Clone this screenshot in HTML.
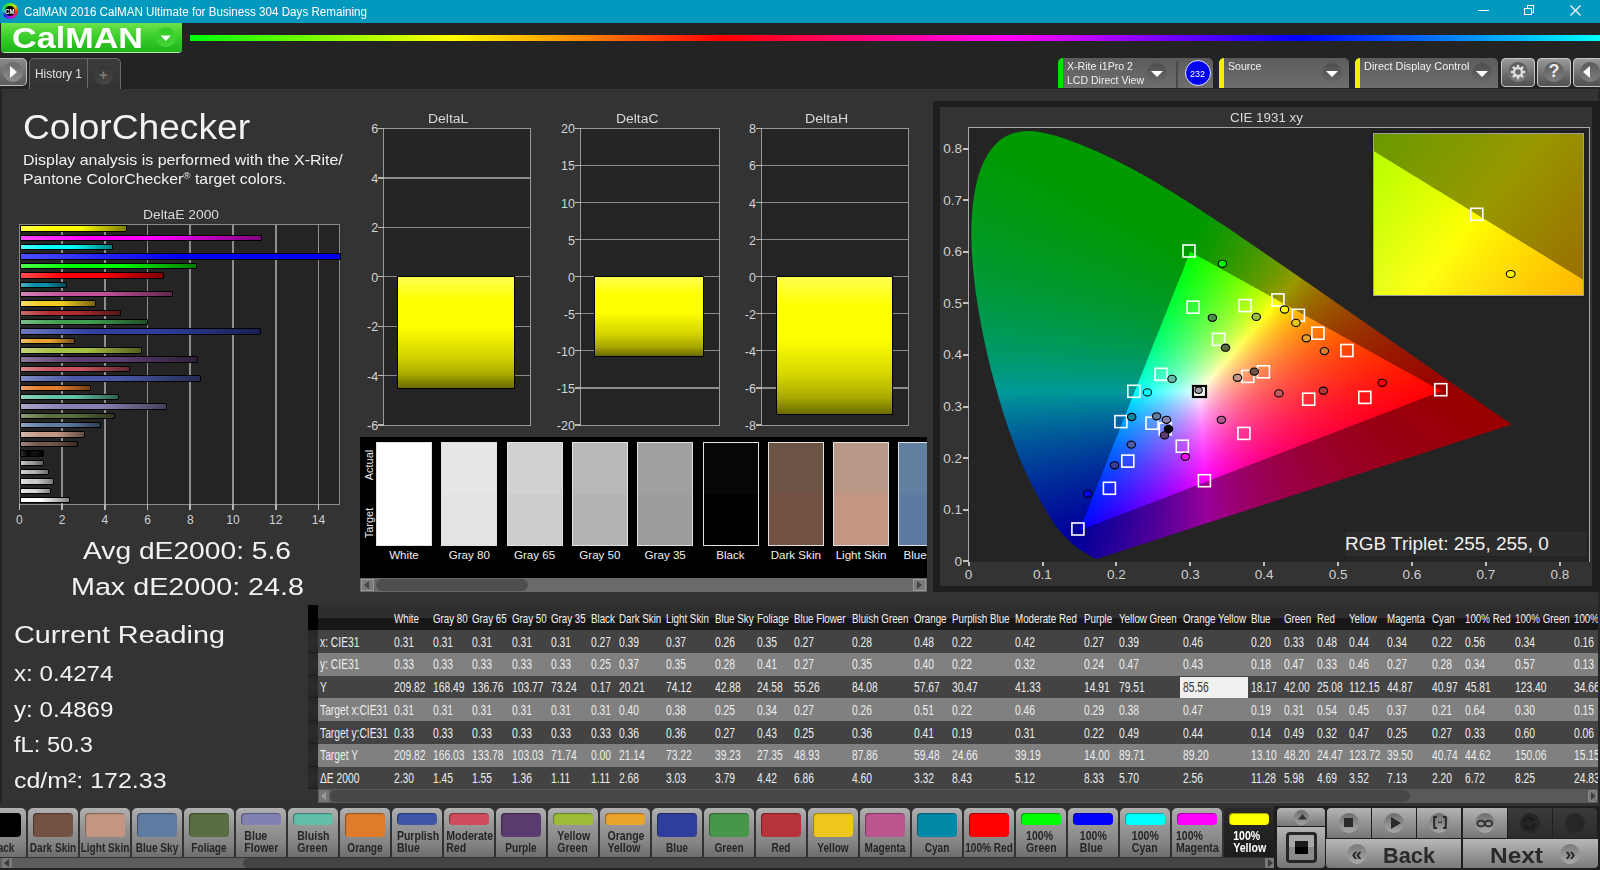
<!DOCTYPE html>
<html><head><meta charset="utf-8"><title>CalMAN ColorChecker</title>
<style>
html,body{margin:0;padding:0;width:1600px;height:870px;overflow:hidden;background:#232323;font-family:"Liberation Sans",sans-serif;}
body{position:relative;}
</style></head><body>
<div style="position:absolute;left:0;top:88.7px;width:1600px;height:715px;background:#333"></div>
<div style="position:absolute;left:0;top:88px;width:1.5px;height:715px;background:#242424"></div>
<div style="position:absolute;left:1598px;top:88px;width:2px;height:715px;background:#262626"></div>
<div style="position:absolute;left:0;top:0;width:1600px;height:23px;background:#0399be"></div>
<div style="position:absolute;left:2.3px;top:3.3px;width:15.6px;height:15.6px;border-radius:50%;background:conic-gradient(#60f020,#e0d000 50deg,#ff3010 95deg,#e010a0 140deg,#a020f0 180deg,#2020e0 230deg,#10d0c0 270deg,#30d030 320deg,#60f020)"></div>
<div style="position:absolute;left:4.8px;top:5.8px;width:10.6px;height:10.6px;border-radius:50%;background:#000"></div>
<div style="position:absolute;left:5.35px;top:7.91px;font-size:7.2px;line-height:7.2px;color:#fff;white-space:nowrap;font-weight:bold;transform:scaleX(0.8484);transform-origin:0 0;">CM</div>
<div style="position:absolute;left:23.50px;top:6.04px;font-size:12px;line-height:12px;color:#fff;white-space:nowrap;transform:scaleX(0.9685);transform-origin:0 0;">CalMAN 2016 CalMAN Ultimate for Business 304 Days Remaining</div>
<div style="position:absolute;left:1478px;top:10px;width:11px;height:1px;background:#fff"></div>
<div style="position:absolute;left:1526.5px;top:5px;width:7.5px;height:7.5px;border:1px solid #fff;box-sizing:border-box"></div>
<div style="position:absolute;left:1524px;top:7.5px;width:7.5px;height:7.5px;border:1px solid #fff;box-sizing:border-box;background:#0399be"></div>
<svg style="position:absolute;left:1569.5px;top:4.5px" width="11" height="11"><path d="M0.5 0.5L10.5 10.5M10.5 0.5L0.5 10.5" stroke="#fff" stroke-width="1.1"/></svg>
<div style="position:absolute;left:0;top:23px;width:1600px;height:65px;background:#232323"></div>
<div style="position:absolute;left:1px;top:23px;width:181px;height:29px;border-radius:0 0 4px 4px;background:linear-gradient(#6ee34c,#3ccf2a 45%,#1db51b);box-shadow:0 1px 0 #bfe9b6"></div>
<div style="position:absolute;left:12.00px;top:22.61px;font-size:30px;line-height:30px;color:#fff;white-space:nowrap;font-weight:bold;transform:scaleX(1.1391);transform-origin:0 0;">CalMAN</div>
<div style="position:absolute;left:156px;top:27px;width:20px;height:20px;border-radius:50%;background:radial-gradient(circle at 50% 30%,#2ecf26,#40d030 60%,#55dd40)"></div>
<svg style="position:absolute;left:160px;top:34px" width="12" height="8"><path d="M0.5 1.5L11 1.5L5.8 7z" fill="#fff"/></svg>
<div style="position:absolute;left:190px;top:35px;width:1410px;height:6px;background:linear-gradient(90deg,#00ff00 0px,#ffff00 260px,#ff8000 400px,#ff0000 530px,#ff00ff 820px,#0000ff 1110px,#00ffff 1410px);filter:blur(0.4px)"></div>
<div style="position:absolute;left:0px;top:58px;width:27px;height:28px;border-radius:0 5px 5px 0;background:linear-gradient(#8a8a8a,#5a5a5a);border:1.2px solid #c0c0c0;border-left:none;box-sizing:border-box"></div>
<div style="position:absolute;left:3px;top:62px;width:20px;height:20px;border-radius:50%;background:linear-gradient(#6a6a6a,#8e8e8e)"></div>
<svg style="position:absolute;left:10px;top:66px" width="8" height="12"><path d="M0 0L7 6L0 12z" fill="#fff"/></svg>
<div style="position:absolute;left:29px;top:58px;width:92px;height:31px;border-radius:5px 5px 0 0;background:linear-gradient(#3c3c3c,#323232);border:1px solid #6a6a6a;border-bottom:none;box-sizing:border-box"></div>
<div style="position:absolute;left:87.2px;top:59px;width:1.2px;height:29px;background:#6a6a6a"></div>
<div style="position:absolute;left:35.00px;top:67.94px;font-size:12px;line-height:12px;color:#e0e0e0;white-space:nowrap;transform:scaleX(0.9927);transform-origin:0 0;">History 1</div>
<div style="position:absolute;left:93.8px;top:65px;width:19px;height:20px;border-radius:50%;background:linear-gradient(#353535,#454545)"></div>
<div style="position:absolute;left:98.92px;top:67.10px;font-size:15px;line-height:15px;color:#7a7a7a;white-space:nowrap;font-weight:bold;">+</div>
<div style="position:absolute;left:1058px;top:58px;width:155px;height:29.7px;border-radius:5px 5px 0 0;background:linear-gradient(#5c5c5c,#6e6e6e);overflow:hidden"><div style="position:absolute;left:0;top:0;width:5.2px;height:30px;background:#00e000"></div><div style="position:absolute;left:9.00px;top:2.86px;font-size:10.5px;line-height:10.5px;color:#f0f0f0;white-space:nowrap;transform:scaleX(1.0098);transform-origin:0 0;">X-Rite i1Pro 2</div><div style="position:absolute;left:9.00px;top:16.86px;font-size:10.5px;line-height:10.5px;color:#f0f0f0;white-space:nowrap;transform:scaleX(1.0022);transform-origin:0 0;">LCD Direct View</div><div style="position:absolute;left:89px;top:5px;width:20px;height:20px;border-radius:50%;background:linear-gradient(#4e4e4e,#686868)"></div><svg style="position:absolute;left:93px;top:12px" width="12" height="8"><path d="M0 1L12 1L6 7z" fill="#fff"/></svg></div>
<div style="position:absolute;left:1176px;top:61px;width:2px;height:27px;background:#4a4a4a"></div>
<div style="position:absolute;left:1184.5px;top:60px;width:26px;height:26px;border-radius:50%;background:#0000f0;border:1px solid #e8e8ff;box-sizing:border-box"></div>
<div style="position:absolute;left:1190.00px;top:68.56px;font-size:9.5px;line-height:9.5px;color:#fff;white-space:nowrap;transform:scaleX(0.9463);transform-origin:0 0;">232</div>
<div style="position:absolute;left:1219px;top:58px;width:130px;height:29.7px;border-radius:5px 5px 0 0;background:linear-gradient(#5c5c5c,#6e6e6e);overflow:hidden"><div style="position:absolute;left:0;top:0;width:5.2px;height:30px;background:#f0f000"></div><div style="position:absolute;left:9.00px;top:2.86px;font-size:10.5px;line-height:10.5px;color:#f0f0f0;white-space:nowrap;transform:scaleX(1.0069);transform-origin:0 0;">Source</div><div style="position:absolute;left:103px;top:5px;width:20px;height:20px;border-radius:50%;background:linear-gradient(#4e4e4e,#686868)"></div><svg style="position:absolute;left:107px;top:12px" width="12" height="8"><path d="M0 1L12 1L6 7z" fill="#fff"/></svg></div>
<div style="position:absolute;left:1355px;top:58px;width:143px;height:29.7px;border-radius:5px 5px 0 0;background:linear-gradient(#5c5c5c,#6e6e6e);overflow:hidden"><div style="position:absolute;left:0;top:0;width:5.2px;height:30px;background:#f0f000"></div><div style="position:absolute;left:9.00px;top:2.86px;font-size:10.5px;line-height:10.5px;color:#f0f0f0;white-space:nowrap;transform:scaleX(1.0391);transform-origin:0 0;">Direct Display Control</div><div style="position:absolute;left:117px;top:5px;width:20px;height:20px;border-radius:50%;background:linear-gradient(#4e4e4e,#686868)"></div><svg style="position:absolute;left:121px;top:12px" width="12" height="8"><path d="M0 1L12 1L6 7z" fill="#fff"/></svg></div>
<div style="position:absolute;left:1501px;top:58px;width:34px;height:29px;border-radius:4px;background:linear-gradient(#9a9a9a,#555 90%);border:1px solid #c8c8c8;box-sizing:border-box"></div>
<div style="position:absolute;left:1508px;top:62px;width:20px;height:20px;border-radius:50%;background:linear-gradient(#5a5a5a,#7e7e7e)"></div>
<div style="position:absolute;left:1537px;top:58px;width:34px;height:29px;border-radius:4px;background:linear-gradient(#9a9a9a,#555 90%);border:1px solid #c8c8c8;box-sizing:border-box"></div>
<div style="position:absolute;left:1544px;top:62px;width:20px;height:20px;border-radius:50%;background:linear-gradient(#5a5a5a,#7e7e7e)"></div>
<div style="position:absolute;left:1573px;top:58px;width:34px;height:29px;border-radius:4px;background:linear-gradient(#9a9a9a,#555 90%);border:1px solid #c8c8c8;box-sizing:border-box"></div>
<div style="position:absolute;left:1580px;top:62px;width:20px;height:20px;border-radius:50%;background:linear-gradient(#5a5a5a,#7e7e7e)"></div>
<svg style="position:absolute;left:1510px;top:64px" width="16" height="16" viewBox="0 0 16 16"><g fill="#ddd"><circle cx="8" cy="8" r="5.2"/>
<rect x="6.8" y="0.8" width="2.4" height="14.4"/><rect x="0.8" y="6.8" width="14.4" height="2.4"/>
<rect x="6.8" y="0.8" width="2.4" height="14.4" transform="rotate(45 8 8)"/><rect x="6.8" y="0.8" width="2.4" height="14.4" transform="rotate(-45 8 8)"/></g>
<circle cx="8" cy="8" r="2.8" fill="#6a6a6a"/></svg>
<div style="position:absolute;left:1545px;top:61px;width:18px;font-size:18px;font-weight:bold;color:#e8e8e8;text-align:center">?</div>
<svg style="position:absolute;left:1583px;top:66px" width="8" height="12"><path d="M7 0L0 6L7 12z" fill="#fff"/></svg>
<div style="position:absolute;left:23.00px;top:110.15px;font-size:35.5px;line-height:35.5px;color:#f2f2f2;white-space:nowrap;transform:scaleX(1.0460);transform-origin:0 0;">ColorChecker</div>
<div style="position:absolute;left:23.00px;top:152.81px;font-size:14.4px;line-height:14.4px;color:#f2f2f2;white-space:nowrap;transform:scaleX(1.1076);transform-origin:0 0;">Display analysis is performed with the X-Rite/</div>
<div style="position:absolute;left:23.00px;top:172.21px;font-size:14.4px;line-height:14.4px;color:#f2f2f2;white-space:nowrap;transform:scaleX(1.1005);transform-origin:0 0;">Pantone ColorChecker<span style="font-size:9px;line-height:0;vertical-align:5px">&reg;</span> target colors.</div>
<div style="position:absolute;left:142.50px;top:209.42px;font-size:12.5px;line-height:12.5px;color:#d8d8d8;white-space:nowrap;transform:scaleX(1.1046);transform-origin:0 0;">DeltaE 2000</div>
<div style="position:absolute;left:19px;top:224px;width:321px;height:281px;box-sizing:border-box;background:#242424;border:1px solid #8a8a8a"></div>
<div style="position:absolute;left:61.22px;top:225px;width:1.8px;height:279px;background:#8e8e8e"></div>
<div style="position:absolute;left:103.94px;top:225px;width:1.8px;height:279px;background:#8e8e8e"></div>
<div style="position:absolute;left:146.66px;top:225px;width:1.8px;height:279px;background:#8e8e8e"></div>
<div style="position:absolute;left:189.38px;top:225px;width:1.8px;height:279px;background:#8e8e8e"></div>
<div style="position:absolute;left:232.10px;top:225px;width:1.8px;height:279px;background:#8e8e8e"></div>
<div style="position:absolute;left:274.82px;top:225px;width:1.8px;height:279px;background:#8e8e8e"></div>
<div style="position:absolute;left:317.54px;top:225px;width:1.8px;height:279px;background:#8e8e8e"></div>
<div style="position:absolute;left:18.60px;top:504px;width:1.6px;height:5.5px;background:#b8b8b8"></div>
<div style="position:absolute;left:16.06px;top:513.84px;font-size:12px;line-height:12px;color:#d0d0d0;white-space:nowrap;">0</div>
<div style="position:absolute;left:61.32px;top:504px;width:1.6px;height:5.5px;background:#b8b8b8"></div>
<div style="position:absolute;left:58.78px;top:513.84px;font-size:12px;line-height:12px;color:#d0d0d0;white-space:nowrap;">2</div>
<div style="position:absolute;left:104.04px;top:504px;width:1.6px;height:5.5px;background:#b8b8b8"></div>
<div style="position:absolute;left:101.50px;top:513.84px;font-size:12px;line-height:12px;color:#d0d0d0;white-space:nowrap;">4</div>
<div style="position:absolute;left:146.76px;top:504px;width:1.6px;height:5.5px;background:#b8b8b8"></div>
<div style="position:absolute;left:144.22px;top:513.84px;font-size:12px;line-height:12px;color:#d0d0d0;white-space:nowrap;">6</div>
<div style="position:absolute;left:189.48px;top:504px;width:1.6px;height:5.5px;background:#b8b8b8"></div>
<div style="position:absolute;left:186.94px;top:513.84px;font-size:12px;line-height:12px;color:#d0d0d0;white-space:nowrap;">8</div>
<div style="position:absolute;left:232.20px;top:504px;width:1.6px;height:5.5px;background:#b8b8b8"></div>
<div style="position:absolute;left:226.33px;top:513.84px;font-size:12px;line-height:12px;color:#d0d0d0;white-space:nowrap;">10</div>
<div style="position:absolute;left:274.92px;top:504px;width:1.6px;height:5.5px;background:#b8b8b8"></div>
<div style="position:absolute;left:269.05px;top:513.84px;font-size:12px;line-height:12px;color:#d0d0d0;white-space:nowrap;">12</div>
<div style="position:absolute;left:317.64px;top:504px;width:1.6px;height:5.5px;background:#b8b8b8"></div>
<div style="position:absolute;left:311.77px;top:513.84px;font-size:12px;line-height:12px;color:#d0d0d0;white-space:nowrap;">14</div>
<div style="position:absolute;left:20px;top:225.30px;width:107.2px;height:6.4px;box-sizing:border-box;border:1px solid #000;border-radius:1px;background:linear-gradient(90deg,rgba(255,255,255,0.3),rgba(255,255,255,0) 30%,rgba(0,0,0,0) 55%,rgba(0,0,0,0.5)),#ffff00;"></div>
<div style="position:absolute;left:20px;top:234.67px;width:242.4px;height:6.4px;box-sizing:border-box;border:1px solid #000;border-radius:1px;background:linear-gradient(90deg,rgba(255,255,255,0.3),rgba(255,255,255,0) 30%,rgba(0,0,0,0) 55%,rgba(0,0,0,0.5)),#ff00ff;"></div>
<div style="position:absolute;left:20px;top:244.04px;width:92.9px;height:6.4px;box-sizing:border-box;border:1px solid #000;border-radius:1px;background:linear-gradient(90deg,rgba(255,255,255,0.3),rgba(255,255,255,0) 30%,rgba(0,0,0,0) 55%,rgba(0,0,0,0.5)),#00ffff;"></div>
<div style="position:absolute;left:20px;top:253.41px;width:320.8px;height:6.4px;box-sizing:border-box;border:1px solid #000;border-radius:1px;background:linear-gradient(90deg,rgba(255,255,255,0.3),rgba(255,255,255,0) 30%,rgba(0,0,0,0) 55%,rgba(0,0,0,0.5)),#0000ff;background-size:530px 100%;"></div>
<div style="position:absolute;left:20px;top:262.78px;width:176.6px;height:6.4px;box-sizing:border-box;border:1px solid #000;border-radius:1px;background:linear-gradient(90deg,rgba(255,255,255,0.3),rgba(255,255,255,0) 30%,rgba(0,0,0,0) 55%,rgba(0,0,0,0.5)),#00ff00;"></div>
<div style="position:absolute;left:20px;top:272.15px;width:143.9px;height:6.4px;box-sizing:border-box;border:1px solid #000;border-radius:1px;background:linear-gradient(90deg,rgba(255,255,255,0.3),rgba(255,255,255,0) 30%,rgba(0,0,0,0) 55%,rgba(0,0,0,0.5)),#ff0000;"></div>
<div style="position:absolute;left:20px;top:281.52px;width:47.4px;height:6.4px;box-sizing:border-box;border:1px solid #000;border-radius:1px;background:linear-gradient(90deg,rgba(255,255,255,0.3),rgba(255,255,255,0) 30%,rgba(0,0,0,0) 55%,rgba(0,0,0,0.5)),#0890a8;"></div>
<div style="position:absolute;left:20px;top:290.89px;width:152.7px;height:6.4px;box-sizing:border-box;border:1px solid #000;border-radius:1px;background:linear-gradient(90deg,rgba(255,255,255,0.3),rgba(255,255,255,0) 30%,rgba(0,0,0,0) 55%,rgba(0,0,0,0.5)),#c0509a;"></div>
<div style="position:absolute;left:20px;top:300.26px;width:75.6px;height:6.4px;box-sizing:border-box;border:1px solid #000;border-radius:1px;background:linear-gradient(90deg,rgba(255,255,255,0.3),rgba(255,255,255,0) 30%,rgba(0,0,0,0) 55%,rgba(0,0,0,0.5)),#f0cc20;"></div>
<div style="position:absolute;left:20px;top:309.63px;width:100.6px;height:6.4px;box-sizing:border-box;border:1px solid #000;border-radius:1px;background:linear-gradient(90deg,rgba(255,255,255,0.3),rgba(255,255,255,0) 30%,rgba(0,0,0,0) 55%,rgba(0,0,0,0.5)),#b02c30;"></div>
<div style="position:absolute;left:20px;top:319.00px;width:128.1px;height:6.4px;box-sizing:border-box;border:1px solid #000;border-radius:1px;background:linear-gradient(90deg,rgba(255,255,255,0.3),rgba(255,255,255,0) 30%,rgba(0,0,0,0) 55%,rgba(0,0,0,0.5)),#40a050;"></div>
<div style="position:absolute;left:20px;top:328.37px;width:241.3px;height:6.4px;box-sizing:border-box;border:1px solid #000;border-radius:1px;background:linear-gradient(90deg,rgba(255,255,255,0.3),rgba(255,255,255,0) 30%,rgba(0,0,0,0) 55%,rgba(0,0,0,0.5)),#3040a0;"></div>
<div style="position:absolute;left:20px;top:337.74px;width:55.1px;height:6.4px;box-sizing:border-box;border:1px solid #000;border-radius:1px;background:linear-gradient(90deg,rgba(255,255,255,0.3),rgba(255,255,255,0) 30%,rgba(0,0,0,0) 55%,rgba(0,0,0,0.5)),#e8a030;"></div>
<div style="position:absolute;left:20px;top:347.11px;width:122.2px;height:6.4px;box-sizing:border-box;border:1px solid #000;border-radius:1px;background:linear-gradient(90deg,rgba(255,255,255,0.3),rgba(255,255,255,0) 30%,rgba(0,0,0,0) 55%,rgba(0,0,0,0.5)),#a6c040;"></div>
<div style="position:absolute;left:20px;top:356.48px;width:178.3px;height:6.4px;box-sizing:border-box;border:1px solid #000;border-radius:1px;background:linear-gradient(90deg,rgba(255,255,255,0.3),rgba(255,255,255,0) 30%,rgba(0,0,0,0) 55%,rgba(0,0,0,0.5)),#5c3e70;"></div>
<div style="position:absolute;left:20px;top:365.85px;width:109.8px;height:6.4px;box-sizing:border-box;border:1px solid #000;border-radius:1px;background:linear-gradient(90deg,rgba(255,255,255,0.3),rgba(255,255,255,0) 30%,rgba(0,0,0,0) 55%,rgba(0,0,0,0.5)),#c85462;"></div>
<div style="position:absolute;left:20px;top:375.22px;width:180.5px;height:6.4px;box-sizing:border-box;border:1px solid #000;border-radius:1px;background:linear-gradient(90deg,rgba(255,255,255,0.3),rgba(255,255,255,0) 30%,rgba(0,0,0,0) 55%,rgba(0,0,0,0.5)),#4858a6;"></div>
<div style="position:absolute;left:20px;top:384.59px;width:71.3px;height:6.4px;box-sizing:border-box;border:1px solid #000;border-radius:1px;background:linear-gradient(90deg,rgba(255,255,255,0.3),rgba(255,255,255,0) 30%,rgba(0,0,0,0) 55%,rgba(0,0,0,0.5)),#e07c2c;"></div>
<div style="position:absolute;left:20px;top:393.96px;width:98.7px;height:6.4px;box-sizing:border-box;border:1px solid #000;border-radius:1px;background:linear-gradient(90deg,rgba(255,255,255,0.3),rgba(255,255,255,0) 30%,rgba(0,0,0,0) 55%,rgba(0,0,0,0.5)),#62c0a8;"></div>
<div style="position:absolute;left:20px;top:403.33px;width:146.9px;height:6.4px;box-sizing:border-box;border:1px solid #000;border-radius:1px;background:linear-gradient(90deg,rgba(255,255,255,0.3),rgba(255,255,255,0) 30%,rgba(0,0,0,0) 55%,rgba(0,0,0,0.5)),#8682b4;"></div>
<div style="position:absolute;left:20px;top:412.70px;width:94.8px;height:6.4px;box-sizing:border-box;border:1px solid #000;border-radius:1px;background:linear-gradient(90deg,rgba(255,255,255,0.3),rgba(255,255,255,0) 30%,rgba(0,0,0,0) 55%,rgba(0,0,0,0.5)),#5a6e40;"></div>
<div style="position:absolute;left:20px;top:422.07px;width:81.4px;height:6.4px;box-sizing:border-box;border:1px solid #000;border-radius:1px;background:linear-gradient(90deg,rgba(255,255,255,0.3),rgba(255,255,255,0) 30%,rgba(0,0,0,0) 55%,rgba(0,0,0,0.5)),#5f7ea6;"></div>
<div style="position:absolute;left:20px;top:431.44px;width:65.1px;height:6.4px;box-sizing:border-box;border:1px solid #000;border-radius:1px;background:linear-gradient(90deg,rgba(255,255,255,0.3),rgba(255,255,255,0) 30%,rgba(0,0,0,0) 55%,rgba(0,0,0,0.5)),#c49a86;"></div>
<div style="position:absolute;left:20px;top:440.81px;width:57.6px;height:6.4px;box-sizing:border-box;border:1px solid #000;border-radius:1px;background:linear-gradient(90deg,rgba(255,255,255,0.3),rgba(255,255,255,0) 30%,rgba(0,0,0,0) 55%,rgba(0,0,0,0.5)),#74574a;"></div>
<div style="position:absolute;left:20px;top:450.18px;width:24.1px;height:6.4px;box-sizing:border-box;border:1px solid #000;border-radius:1px;background:linear-gradient(90deg,#333,#000 30%,#111 60%,#000);"></div>
<div style="position:absolute;left:20px;top:459.55px;width:24.1px;height:6.4px;box-sizing:border-box;border:1px solid #000;border-radius:1px;background:linear-gradient(90deg,rgba(255,255,255,0.45),rgba(255,255,255,0) 35%,rgba(0,0,0,0) 50%,rgba(0,0,0,0.4)),#a0a0a0;"></div>
<div style="position:absolute;left:20px;top:468.92px;width:29.4px;height:6.4px;box-sizing:border-box;border:1px solid #000;border-radius:1px;background:linear-gradient(90deg,rgba(255,255,255,0.45),rgba(255,255,255,0) 35%,rgba(0,0,0,0) 50%,rgba(0,0,0,0.4)),#b4b4b4;"></div>
<div style="position:absolute;left:20px;top:478.29px;width:33.5px;height:6.4px;box-sizing:border-box;border:1px solid #000;border-radius:1px;background:linear-gradient(90deg,rgba(255,255,255,0.45),rgba(255,255,255,0) 35%,rgba(0,0,0,0) 50%,rgba(0,0,0,0.4)),#c8c8c8;"></div>
<div style="position:absolute;left:20px;top:487.66px;width:31.4px;height:6.4px;box-sizing:border-box;border:1px solid #000;border-radius:1px;background:linear-gradient(90deg,rgba(255,255,255,0.45),rgba(255,255,255,0) 35%,rgba(0,0,0,0) 50%,rgba(0,0,0,0.4)),#d8d8d8;"></div>
<div style="position:absolute;left:20px;top:497.03px;width:49.5px;height:6.4px;box-sizing:border-box;border:1px solid #000;border-radius:1px;background:linear-gradient(90deg,#fff,#fff 40%,#858585);"></div>
<div style="position:absolute;left:82.80px;top:539.26px;font-size:24.5px;line-height:24.5px;color:#f2f2f2;white-space:nowrap;transform:scaleX(1.1509);transform-origin:0 0;">Avg dE2000: 5.6</div>
<div style="position:absolute;left:70.80px;top:575.06px;font-size:24.5px;line-height:24.5px;color:#f2f2f2;white-space:nowrap;transform:scaleX(1.1716);transform-origin:0 0;">Max dE2000: 24.8</div>
<div style="position:absolute;left:13.50px;top:623.98px;font-size:23.3px;line-height:23.3px;color:#f2f2f2;white-space:nowrap;transform:scaleX(1.2342);transform-origin:0 0;">Current Reading</div>
<div style="position:absolute;left:13.80px;top:663.38px;font-size:22px;line-height:22px;color:#f2f2f2;white-space:nowrap;transform:scaleX(1.0992);transform-origin:0 0;">x: 0.4274</div>
<div style="position:absolute;left:13.80px;top:698.88px;font-size:22px;line-height:22px;color:#f2f2f2;white-space:nowrap;transform:scaleX(1.0992);transform-origin:0 0;">y: 0.4869</div>
<div style="position:absolute;left:13.80px;top:734.18px;font-size:22px;line-height:22px;color:#f2f2f2;white-space:nowrap;transform:scaleX(1.0764);transform-origin:0 0;">fL: 50.3</div>
<div style="position:absolute;left:13.80px;top:769.68px;font-size:22px;line-height:22px;color:#f2f2f2;white-space:nowrap;transform:scaleX(1.1337);transform-origin:0 0;">cd/m&sup2;: 172.33</div>
<div style="position:absolute;left:383.05px;top:127.75px;width:148.00px;height:298.00px;background:#242424;border:1.5px solid #989898;box-sizing:border-box"></div>
<div style="position:absolute;left:378.30px;top:127.90px;width:5.5px;height:1.2px;background:#b8b8b8"></div>
<div style="position:absolute;left:371.15px;top:123.42px;font-size:12.5px;line-height:12.5px;color:#d4d4d4;white-space:nowrap;">6</div>
<div style="position:absolute;left:383.80px;top:177.32px;width:146.50px;height:1.2px;background:#8a8a8a"></div>
<div style="position:absolute;left:378.30px;top:177.32px;width:5.5px;height:1.2px;background:#b8b8b8"></div>
<div style="position:absolute;left:371.15px;top:172.84px;font-size:12.5px;line-height:12.5px;color:#d4d4d4;white-space:nowrap;">4</div>
<div style="position:absolute;left:383.80px;top:226.73px;width:146.50px;height:1.2px;background:#8a8a8a"></div>
<div style="position:absolute;left:378.30px;top:226.73px;width:5.5px;height:1.2px;background:#b8b8b8"></div>
<div style="position:absolute;left:371.15px;top:222.25px;font-size:12.5px;line-height:12.5px;color:#d4d4d4;white-space:nowrap;">2</div>
<div style="position:absolute;left:383.80px;top:276.15px;width:146.50px;height:1.2px;background:#8a8a8a"></div>
<div style="position:absolute;left:378.30px;top:276.15px;width:5.5px;height:1.2px;background:#b8b8b8"></div>
<div style="position:absolute;left:371.15px;top:271.67px;font-size:12.5px;line-height:12.5px;color:#d4d4d4;white-space:nowrap;">0</div>
<div style="position:absolute;left:383.80px;top:325.57px;width:146.50px;height:1.2px;background:#8a8a8a"></div>
<div style="position:absolute;left:378.30px;top:325.57px;width:5.5px;height:1.2px;background:#b8b8b8"></div>
<div style="position:absolute;left:366.99px;top:321.09px;font-size:12.5px;line-height:12.5px;color:#d4d4d4;white-space:nowrap;">-2</div>
<div style="position:absolute;left:383.80px;top:374.98px;width:146.50px;height:1.2px;background:#8a8a8a"></div>
<div style="position:absolute;left:378.30px;top:374.98px;width:5.5px;height:1.2px;background:#b8b8b8"></div>
<div style="position:absolute;left:366.99px;top:370.50px;font-size:12.5px;line-height:12.5px;color:#d4d4d4;white-space:nowrap;">-4</div>
<div style="position:absolute;left:378.30px;top:424.40px;width:5.5px;height:1.2px;background:#b8b8b8"></div>
<div style="position:absolute;left:366.99px;top:419.92px;font-size:12.5px;line-height:12.5px;color:#d4d4d4;white-space:nowrap;">-6</div>
<div style="position:absolute;left:397.20px;top:276.00px;width:117.60px;height:112.80px;box-sizing:border-box;border:1.6px solid #000;background:linear-gradient(#ffff50,#ffff00 22%,#ffff00 45%,#d4d400 72%,#a8a800 88%,#6a6a00)"></div>
<div style="position:absolute;left:428.10px;top:113.18px;font-size:12.9px;line-height:12.9px;color:#d8d8d8;white-space:nowrap;transform:scaleX(1.0834);transform-origin:0 0;">DeltaL</div>
<div style="position:absolute;left:579.85px;top:127.75px;width:140.20px;height:298.00px;background:#242424;border:1.5px solid #989898;box-sizing:border-box"></div>
<div style="position:absolute;left:575.10px;top:127.90px;width:5.5px;height:1.2px;background:#b8b8b8"></div>
<div style="position:absolute;left:561.00px;top:123.42px;font-size:12.5px;line-height:12.5px;color:#d4d4d4;white-space:nowrap;">20</div>
<div style="position:absolute;left:580.60px;top:164.96px;width:138.70px;height:1.2px;background:#8a8a8a"></div>
<div style="position:absolute;left:575.10px;top:164.96px;width:5.5px;height:1.2px;background:#b8b8b8"></div>
<div style="position:absolute;left:561.00px;top:160.48px;font-size:12.5px;line-height:12.5px;color:#d4d4d4;white-space:nowrap;">15</div>
<div style="position:absolute;left:580.60px;top:202.03px;width:138.70px;height:1.2px;background:#8a8a8a"></div>
<div style="position:absolute;left:575.10px;top:202.03px;width:5.5px;height:1.2px;background:#b8b8b8"></div>
<div style="position:absolute;left:561.00px;top:197.54px;font-size:12.5px;line-height:12.5px;color:#d4d4d4;white-space:nowrap;">10</div>
<div style="position:absolute;left:580.60px;top:239.09px;width:138.70px;height:1.2px;background:#8a8a8a"></div>
<div style="position:absolute;left:575.10px;top:239.09px;width:5.5px;height:1.2px;background:#b8b8b8"></div>
<div style="position:absolute;left:567.95px;top:234.61px;font-size:12.5px;line-height:12.5px;color:#d4d4d4;white-space:nowrap;">5</div>
<div style="position:absolute;left:580.60px;top:276.15px;width:138.70px;height:1.2px;background:#8a8a8a"></div>
<div style="position:absolute;left:575.10px;top:276.15px;width:5.5px;height:1.2px;background:#b8b8b8"></div>
<div style="position:absolute;left:567.95px;top:271.67px;font-size:12.5px;line-height:12.5px;color:#d4d4d4;white-space:nowrap;">0</div>
<div style="position:absolute;left:580.60px;top:313.21px;width:138.70px;height:1.2px;background:#8a8a8a"></div>
<div style="position:absolute;left:575.10px;top:313.21px;width:5.5px;height:1.2px;background:#b8b8b8"></div>
<div style="position:absolute;left:563.79px;top:308.73px;font-size:12.5px;line-height:12.5px;color:#d4d4d4;white-space:nowrap;">-5</div>
<div style="position:absolute;left:580.60px;top:350.27px;width:138.70px;height:1.2px;background:#8a8a8a"></div>
<div style="position:absolute;left:575.10px;top:350.27px;width:5.5px;height:1.2px;background:#b8b8b8"></div>
<div style="position:absolute;left:556.83px;top:345.79px;font-size:12.5px;line-height:12.5px;color:#d4d4d4;white-space:nowrap;">-10</div>
<div style="position:absolute;left:580.60px;top:387.34px;width:138.70px;height:1.2px;background:#8a8a8a"></div>
<div style="position:absolute;left:575.10px;top:387.34px;width:5.5px;height:1.2px;background:#b8b8b8"></div>
<div style="position:absolute;left:556.83px;top:382.86px;font-size:12.5px;line-height:12.5px;color:#d4d4d4;white-space:nowrap;">-15</div>
<div style="position:absolute;left:575.10px;top:424.40px;width:5.5px;height:1.2px;background:#b8b8b8"></div>
<div style="position:absolute;left:556.83px;top:419.92px;font-size:12.5px;line-height:12.5px;color:#d4d4d4;white-space:nowrap;">-20</div>
<div style="position:absolute;left:594.30px;top:276.00px;width:110.00px;height:81.20px;box-sizing:border-box;border:1.6px solid #000;background:linear-gradient(#ffff50,#ffff00 22%,#ffff00 45%,#d4d400 72%,#a8a800 88%,#6a6a00)"></div>
<div style="position:absolute;left:616.15px;top:113.18px;font-size:12.9px;line-height:12.9px;color:#d8d8d8;white-space:nowrap;transform:scaleX(1.0778);transform-origin:0 0;">DeltaC</div>
<div style="position:absolute;left:760.85px;top:127.75px;width:148.40px;height:298.00px;background:#242424;border:1.5px solid #989898;box-sizing:border-box"></div>
<div style="position:absolute;left:756.10px;top:127.90px;width:5.5px;height:1.2px;background:#b8b8b8"></div>
<div style="position:absolute;left:748.95px;top:123.42px;font-size:12.5px;line-height:12.5px;color:#d4d4d4;white-space:nowrap;">8</div>
<div style="position:absolute;left:761.60px;top:164.96px;width:146.90px;height:1.2px;background:#8a8a8a"></div>
<div style="position:absolute;left:756.10px;top:164.96px;width:5.5px;height:1.2px;background:#b8b8b8"></div>
<div style="position:absolute;left:748.95px;top:160.48px;font-size:12.5px;line-height:12.5px;color:#d4d4d4;white-space:nowrap;">6</div>
<div style="position:absolute;left:761.60px;top:202.03px;width:146.90px;height:1.2px;background:#8a8a8a"></div>
<div style="position:absolute;left:756.10px;top:202.03px;width:5.5px;height:1.2px;background:#b8b8b8"></div>
<div style="position:absolute;left:748.95px;top:197.54px;font-size:12.5px;line-height:12.5px;color:#d4d4d4;white-space:nowrap;">4</div>
<div style="position:absolute;left:761.60px;top:239.09px;width:146.90px;height:1.2px;background:#8a8a8a"></div>
<div style="position:absolute;left:756.10px;top:239.09px;width:5.5px;height:1.2px;background:#b8b8b8"></div>
<div style="position:absolute;left:748.95px;top:234.61px;font-size:12.5px;line-height:12.5px;color:#d4d4d4;white-space:nowrap;">2</div>
<div style="position:absolute;left:761.60px;top:276.15px;width:146.90px;height:1.2px;background:#8a8a8a"></div>
<div style="position:absolute;left:756.10px;top:276.15px;width:5.5px;height:1.2px;background:#b8b8b8"></div>
<div style="position:absolute;left:748.95px;top:271.67px;font-size:12.5px;line-height:12.5px;color:#d4d4d4;white-space:nowrap;">0</div>
<div style="position:absolute;left:761.60px;top:313.21px;width:146.90px;height:1.2px;background:#8a8a8a"></div>
<div style="position:absolute;left:756.10px;top:313.21px;width:5.5px;height:1.2px;background:#b8b8b8"></div>
<div style="position:absolute;left:744.79px;top:308.73px;font-size:12.5px;line-height:12.5px;color:#d4d4d4;white-space:nowrap;">-2</div>
<div style="position:absolute;left:761.60px;top:350.27px;width:146.90px;height:1.2px;background:#8a8a8a"></div>
<div style="position:absolute;left:756.10px;top:350.27px;width:5.5px;height:1.2px;background:#b8b8b8"></div>
<div style="position:absolute;left:744.79px;top:345.79px;font-size:12.5px;line-height:12.5px;color:#d4d4d4;white-space:nowrap;">-4</div>
<div style="position:absolute;left:761.60px;top:387.34px;width:146.90px;height:1.2px;background:#8a8a8a"></div>
<div style="position:absolute;left:756.10px;top:387.34px;width:5.5px;height:1.2px;background:#b8b8b8"></div>
<div style="position:absolute;left:744.79px;top:382.86px;font-size:12.5px;line-height:12.5px;color:#d4d4d4;white-space:nowrap;">-6</div>
<div style="position:absolute;left:756.10px;top:424.40px;width:5.5px;height:1.2px;background:#b8b8b8"></div>
<div style="position:absolute;left:744.79px;top:419.92px;font-size:12.5px;line-height:12.5px;color:#d4d4d4;white-space:nowrap;">-8</div>
<div style="position:absolute;left:776.20px;top:276.00px;width:116.60px;height:139.30px;box-sizing:border-box;border:1.6px solid #000;background:linear-gradient(#ffff50,#ffff00 22%,#ffff00 45%,#d4d400 72%,#a8a800 88%,#6a6a00)"></div>
<div style="position:absolute;left:804.60px;top:113.18px;font-size:12.9px;line-height:12.9px;color:#d8d8d8;white-space:nowrap;transform:scaleX(1.0956);transform-origin:0 0;">DeltaH</div>
<div style="position:absolute;left:360px;top:437px;width:567px;height:155px;background:#000"></div>
<div style="position:absolute;left:361px;top:458.5px;width:15px;height:15px;"><div style="position:absolute;left:-12px;top:0px;width:40px;text-align:center;transform:rotate(-90deg);font-size:11px;color:#e8e8e8">Actual</div></div>
<div style="position:absolute;left:361px;top:516.5px;width:15px;height:15px;"><div style="position:absolute;left:-12px;top:0px;width:40px;text-align:center;transform:rotate(-90deg);font-size:11px;color:#e8e8e8">Target</div></div>
<div style="position:absolute;left:376.0px;top:442px;width:56.0px;height:104px;overflow:hidden"><div style="position:absolute;left:0;top:0;width:56px;height:104px;box-sizing:border-box;border:1px solid #e0e0e0;background:linear-gradient(#ffffff 50%,#ffffff 50%)"></div></div>
<div style="position:absolute;left:364.0px;top:548.4px;width:80px;text-align:center;font-size:11.6px;color:#f0f0f0;white-space:nowrap;overflow:hidden">White</div>
<div style="position:absolute;left:441.3px;top:442px;width:56.0px;height:104px;overflow:hidden"><div style="position:absolute;left:0;top:0;width:56px;height:104px;box-sizing:border-box;border:1px solid #e0e0e0;background:linear-gradient(#e6e7e7 50%,#e4e4e4 50%)"></div></div>
<div style="position:absolute;left:429.3px;top:548.4px;width:80px;text-align:center;font-size:11.6px;color:#f0f0f0;white-space:nowrap;overflow:hidden">Gray 80</div>
<div style="position:absolute;left:506.6px;top:442px;width:56.0px;height:104px;overflow:hidden"><div style="position:absolute;left:0;top:0;width:56px;height:104px;box-sizing:border-box;border:1px solid #e0e0e0;background:linear-gradient(#d0d1d1 50%,#cccccc 50%)"></div></div>
<div style="position:absolute;left:494.6px;top:548.4px;width:80px;text-align:center;font-size:11.6px;color:#f0f0f0;white-space:nowrap;overflow:hidden">Gray 65</div>
<div style="position:absolute;left:571.9px;top:442px;width:56.0px;height:104px;overflow:hidden"><div style="position:absolute;left:0;top:0;width:56px;height:104px;box-sizing:border-box;border:1px solid #e0e0e0;background:linear-gradient(#b8b9b9 50%,#b4b4b4 50%)"></div></div>
<div style="position:absolute;left:559.9px;top:548.4px;width:80px;text-align:center;font-size:11.6px;color:#f0f0f0;white-space:nowrap;overflow:hidden">Gray 50</div>
<div style="position:absolute;left:637.2px;top:442px;width:56.0px;height:104px;overflow:hidden"><div style="position:absolute;left:0;top:0;width:56px;height:104px;box-sizing:border-box;border:1px solid #e0e0e0;background:linear-gradient(#a0a0a0 50%,#9c9c9c 50%)"></div></div>
<div style="position:absolute;left:625.2px;top:548.4px;width:80px;text-align:center;font-size:11.6px;color:#f0f0f0;white-space:nowrap;overflow:hidden">Gray 35</div>
<div style="position:absolute;left:702.5px;top:442px;width:56.0px;height:104px;overflow:hidden"><div style="position:absolute;left:0;top:0;width:56px;height:104px;box-sizing:border-box;border:1px solid #e0e0e0;background:linear-gradient(#060609 50%,#000000 50%)"></div></div>
<div style="position:absolute;left:690.5px;top:548.4px;width:80px;text-align:center;font-size:11.6px;color:#f0f0f0;white-space:nowrap;overflow:hidden">Black</div>
<div style="position:absolute;left:767.8px;top:442px;width:56.0px;height:104px;overflow:hidden"><div style="position:absolute;left:0;top:0;width:56px;height:104px;box-sizing:border-box;border:1px solid #e0e0e0;background:linear-gradient(#6e5444 50%,#735244 50%)"></div></div>
<div style="position:absolute;left:755.8px;top:548.4px;width:80px;text-align:center;font-size:11.6px;color:#f0f0f0;white-space:nowrap;overflow:hidden">Dark Skin</div>
<div style="position:absolute;left:833.1px;top:442px;width:56.0px;height:104px;overflow:hidden"><div style="position:absolute;left:0;top:0;width:56px;height:104px;box-sizing:border-box;border:1px solid #e0e0e0;background:linear-gradient(#b99786 50%,#c29682 50%)"></div></div>
<div style="position:absolute;left:821.1px;top:548.4px;width:80px;text-align:center;font-size:11.6px;color:#f0f0f0;white-space:nowrap;overflow:hidden">Light Skin</div>
<div style="position:absolute;left:898.4px;top:442px;width:28.6px;height:104px;overflow:hidden"><div style="position:absolute;left:0;top:0;width:56px;height:104px;box-sizing:border-box;border:1px solid #e0e0e0;background:linear-gradient(#60809f 50%,#5e7aa0 50%)"></div></div>
<div style="position:absolute;left:886.4px;top:548.4px;width:40.6px;overflow:hidden"><div style="width:80px;text-align:center;font-size:11.6px;color:#f0f0f0;white-space:nowrap">Blue Sky</div></div>
<div style="position:absolute;left:360px;top:578px;width:567px;height:14px;background:#6a6a6a"></div>
<div style="position:absolute;left:376px;top:579px;width:152px;height:12px;border-radius:6px;background:#4e4e4e"></div>
<div style="position:absolute;left:361px;top:579px;width:13px;height:12px;background:#7a7a7a;border:1px solid #999;box-sizing:border-box"></div>
<svg style="position:absolute;left:364px;top:581px" width="6" height="8"><path d="M5 0L0 4L5 8z" fill="#444"/></svg>
<div style="position:absolute;left:913px;top:579px;width:13px;height:12px;background:#7a7a7a;border:1px solid #999;box-sizing:border-box"></div>
<svg style="position:absolute;left:917px;top:581px" width="6" height="8"><path d="M0 0L5 4L0 8z" fill="#444"/></svg>
<div style="position:absolute;left:927px;top:437px;width:6px;height:155px;background:#333"></div>
<div style="position:absolute;left:933px;top:101px;width:667px;height:491px;background:#1e1e1e"></div>
<div style="position:absolute;left:940px;top:107px;width:652px;height:478.5px;background:#333"></div>
<div style="position:absolute;left:1229.50px;top:112.42px;font-size:12.5px;line-height:12.5px;color:#d8d8d8;white-space:nowrap;transform:scaleX(1.0721);transform-origin:0 0;">CIE 1931 xy</div>
<div style="position:absolute;left:968px;top:127px;width:622px;height:435px;box-sizing:border-box;border:1px solid #a8a8a8;background:#242424"></div>
<div style="position:absolute;left:963px;top:560.4px;width:6px;height:2px;background:#c0c0c0"></div>
<div style="position:absolute;left:954.49px;top:554.77px;font-size:13.5px;line-height:13.5px;color:#d0d0d0;white-space:nowrap;">0</div>
<div style="position:absolute;left:963px;top:508.8px;width:6px;height:2px;background:#c0c0c0"></div>
<div style="position:absolute;left:943.23px;top:503.17px;font-size:13.5px;line-height:13.5px;color:#d0d0d0;white-space:nowrap;">0.1</div>
<div style="position:absolute;left:963px;top:457.2px;width:6px;height:2px;background:#c0c0c0"></div>
<div style="position:absolute;left:943.23px;top:451.57px;font-size:13.5px;line-height:13.5px;color:#d0d0d0;white-space:nowrap;">0.2</div>
<div style="position:absolute;left:963px;top:405.6px;width:6px;height:2px;background:#c0c0c0"></div>
<div style="position:absolute;left:943.23px;top:399.97px;font-size:13.5px;line-height:13.5px;color:#d0d0d0;white-space:nowrap;">0.3</div>
<div style="position:absolute;left:963px;top:354.0px;width:6px;height:2px;background:#c0c0c0"></div>
<div style="position:absolute;left:943.23px;top:348.37px;font-size:13.5px;line-height:13.5px;color:#d0d0d0;white-space:nowrap;">0.4</div>
<div style="position:absolute;left:963px;top:302.4px;width:6px;height:2px;background:#c0c0c0"></div>
<div style="position:absolute;left:943.23px;top:296.77px;font-size:13.5px;line-height:13.5px;color:#d0d0d0;white-space:nowrap;">0.5</div>
<div style="position:absolute;left:963px;top:250.8px;width:6px;height:2px;background:#c0c0c0"></div>
<div style="position:absolute;left:943.23px;top:245.17px;font-size:13.5px;line-height:13.5px;color:#d0d0d0;white-space:nowrap;">0.6</div>
<div style="position:absolute;left:963px;top:199.2px;width:6px;height:2px;background:#c0c0c0"></div>
<div style="position:absolute;left:943.23px;top:193.57px;font-size:13.5px;line-height:13.5px;color:#d0d0d0;white-space:nowrap;">0.7</div>
<div style="position:absolute;left:963px;top:147.6px;width:6px;height:2px;background:#c0c0c0"></div>
<div style="position:absolute;left:943.23px;top:141.97px;font-size:13.5px;line-height:13.5px;color:#d0d0d0;white-space:nowrap;">0.8</div>
<div style="position:absolute;left:967.6px;top:562px;width:2px;height:4px;background:#c0c0c0"></div>
<div style="position:absolute;left:964.85px;top:568.37px;font-size:13.5px;line-height:13.5px;color:#d0d0d0;white-space:nowrap;">0</div>
<div style="position:absolute;left:1041.5px;top:562px;width:2px;height:4px;background:#c0c0c0"></div>
<div style="position:absolute;left:1033.12px;top:568.37px;font-size:13.5px;line-height:13.5px;color:#d0d0d0;white-space:nowrap;">0.1</div>
<div style="position:absolute;left:1115.4px;top:562px;width:2px;height:4px;background:#c0c0c0"></div>
<div style="position:absolute;left:1107.02px;top:568.37px;font-size:13.5px;line-height:13.5px;color:#d0d0d0;white-space:nowrap;">0.2</div>
<div style="position:absolute;left:1189.3px;top:562px;width:2px;height:4px;background:#c0c0c0"></div>
<div style="position:absolute;left:1180.92px;top:568.37px;font-size:13.5px;line-height:13.5px;color:#d0d0d0;white-space:nowrap;">0.3</div>
<div style="position:absolute;left:1263.2px;top:562px;width:2px;height:4px;background:#c0c0c0"></div>
<div style="position:absolute;left:1254.82px;top:568.37px;font-size:13.5px;line-height:13.5px;color:#d0d0d0;white-space:nowrap;">0.4</div>
<div style="position:absolute;left:1337.1px;top:562px;width:2px;height:4px;background:#c0c0c0"></div>
<div style="position:absolute;left:1328.72px;top:568.37px;font-size:13.5px;line-height:13.5px;color:#d0d0d0;white-space:nowrap;">0.5</div>
<div style="position:absolute;left:1411.0px;top:562px;width:2px;height:4px;background:#c0c0c0"></div>
<div style="position:absolute;left:1402.62px;top:568.37px;font-size:13.5px;line-height:13.5px;color:#d0d0d0;white-space:nowrap;">0.6</div>
<div style="position:absolute;left:1484.9px;top:562px;width:2px;height:4px;background:#c0c0c0"></div>
<div style="position:absolute;left:1476.52px;top:568.37px;font-size:13.5px;line-height:13.5px;color:#d0d0d0;white-space:nowrap;">0.7</div>
<div style="position:absolute;left:1558.8px;top:562px;width:2px;height:4px;background:#c0c0c0"></div>
<div style="position:absolute;left:1550.42px;top:568.37px;font-size:13.5px;line-height:13.5px;color:#d0d0d0;white-space:nowrap;">0.8</div>
<svg style="position:absolute;left:969px;top:128px" width="620" height="434">
<defs><clipPath id="lcp"><polygon points="128.3,430.8 128.2,430.8 128.2,430.8 128.2,430.8 128.2,430.8 128.1,430.9 128.1,430.9 128.1,430.9 128.0,430.9 128.0,430.9 128.0,430.9 127.9,430.9 127.9,430.9 127.8,430.9 127.8,430.9 127.7,430.9 127.7,430.9 127.6,430.9 127.6,430.9 127.5,430.9 127.4,430.9 127.4,430.9 127.3,430.9 127.2,430.9 127.2,430.9 127.1,430.9 127.0,430.9 126.9,430.9 126.8,430.9 126.7,430.9 126.6,430.9 126.4,430.8 126.3,430.8 126.1,430.7 125.9,430.6 125.7,430.5 125.5,430.4 125.3,430.3 125.0,430.2 124.7,430.0 124.4,429.8 124.1,429.6 123.7,429.4 123.4,429.2 123.0,429.0 122.6,428.7 122.1,428.4 121.6,428.1 121.1,427.8 120.5,427.4 119.9,427.1 119.3,426.7 118.6,426.3 117.9,425.8 117.1,425.4 116.2,424.8 115.3,424.3 114.4,423.7 113.4,423.1 112.3,422.5 111.2,421.9 110.1,421.1 108.8,420.3 107.5,419.3 106.0,418.1 104.4,416.7 102.6,415.0 100.7,413.3 98.8,411.4 96.8,409.4 94.8,407.4 93.0,405.5 91.3,403.6 89.8,401.8 88.4,400.1 87.1,398.4 85.9,396.7 84.6,394.9 83.4,393.0 82.0,390.9 80.6,388.6 79.1,386.1 77.5,383.6 75.9,380.9 74.2,378.0 72.5,375.0 70.7,371.9 68.9,368.5 67.1,364.9 65.1,361.2 63.1,357.3 61.1,353.2 58.9,348.9 56.8,344.5 54.7,339.8 52.5,335.0 50.4,329.8 48.2,324.5 46.1,318.9 43.9,313.1 41.7,307.1 39.6,300.9 37.4,294.5 35.3,287.9 33.2,281.2 31.0,274.2 28.9,266.9 26.8,259.5 24.7,251.8 22.6,244.1 20.6,236.2 18.7,228.3 17.0,220.4 15.3,212.5 13.6,204.4 12.0,196.2 10.5,188.0 9.1,179.7 7.8,171.6 6.7,163.5 5.7,155.6 4.8,147.8 4.0,140.0 3.4,132.2 2.9,124.6 2.5,117.0 2.3,109.7 2.3,102.5 2.5,95.5 2.8,88.7 3.3,82.1 4.0,75.5 4.8,69.2 5.8,63.0 7.0,57.1 8.3,51.5 9.9,46.3 11.6,41.3 13.5,36.6 15.7,32.2 17.9,28.0 20.4,24.1 22.9,20.5 25.6,17.3 28.3,14.4 31.2,11.9 34.3,9.8 37.5,8.0 40.7,6.5 44.1,5.4 47.6,4.4 51.0,3.7 54.5,3.2 58.0,2.9 61.6,2.9 65.3,3.2 69.0,3.8 72.8,4.5 76.5,5.3 80.3,6.2 84.0,7.1 87.7,8.1 91.5,9.2 95.3,10.4 99.0,11.8 102.8,13.2 106.5,14.6 110.3,16.1 113.9,17.6 117.5,19.0 121.1,20.5 124.7,22.0 128.2,23.6 131.7,25.2 135.2,26.8 138.7,28.4 142.2,30.1 145.6,31.8 149.0,33.5 152.4,35.2 155.8,37.0 159.2,38.7 162.5,40.5 165.9,42.3 169.3,44.2 172.6,46.0 176.0,47.9 179.3,49.8 182.7,51.8 186.0,53.7 189.4,55.7 192.7,57.7 196.0,59.7 199.3,61.7 202.7,63.7 206.0,65.7 209.3,67.8 212.6,69.9 215.9,72.0 219.2,74.1 222.5,76.2 225.8,78.3 229.1,80.4 232.4,82.6 235.7,84.7 239.0,86.9 242.3,89.0 245.6,91.2 248.9,93.4 252.2,95.6 255.5,97.8 258.8,100.0 262.1,102.2 265.4,104.5 268.7,106.7 272.0,108.9 275.3,111.2 278.6,113.4 281.9,115.6 285.2,117.9 288.5,120.1 291.8,122.4 295.1,124.7 298.3,126.9 301.6,129.2 304.9,131.4 308.2,133.7 311.5,135.9 314.8,138.2 318.0,140.4 321.3,142.7 324.5,144.9 327.8,147.2 331.0,149.4 334.3,151.6 337.5,153.9 340.7,156.1 343.9,158.3 347.1,160.6 350.3,162.8 353.4,165.0 356.6,167.2 359.7,169.4 362.9,171.5 366.0,173.7 369.1,175.9 372.2,178.0 375.3,180.2 378.3,182.3 381.4,184.4 384.4,186.5 387.4,188.6 390.4,190.7 393.4,192.8 396.4,194.9 399.3,196.9 402.2,198.9 405.1,200.9 408.0,202.9 410.8,204.9 413.7,206.9 416.5,208.8 419.2,210.7 422.0,212.6 424.7,214.5 427.3,216.4 430.0,218.2 432.6,220.0 435.2,221.9 437.7,223.6 440.3,225.4 442.7,227.1 445.1,228.8 447.5,230.5 449.8,232.1 452.1,233.7 454.4,235.2 456.5,236.7 458.7,238.2 460.8,239.7 463.0,241.2 465.0,242.6 467.1,244.1 469.1,245.5 471.1,246.8 473.0,248.2 474.9,249.5 476.8,250.8 478.6,252.1 480.3,253.3 481.9,254.4 483.4,255.4 484.9,256.4 486.4,257.5 488.0,258.6 489.7,259.7 491.6,261.1 493.8,262.5 496.1,264.2 498.6,265.9 501.2,267.7 503.7,269.5 506.2,271.2 508.5,272.9 510.6,274.3 512.5,275.6 514.2,276.8 515.8,277.9 517.4,279.0 518.8,280.0 520.1,280.9 521.5,281.8 522.7,282.7 524.0,283.6 525.1,284.4 526.2,285.2 527.3,285.9 528.3,286.6 529.2,287.2 530.1,287.9 530.9,288.5 531.7,289.0 532.5,289.5 533.2,290.0 533.9,290.5 534.5,290.9 535.0,291.3 535.6,291.7 536.1,292.0 536.6,292.3 537.0,292.6 537.4,292.9 537.8,293.2 538.1,293.4 538.4,293.6 538.7,293.8 539.1,294.1 539.4,294.3 539.8,294.6 540.1,294.8 540.5,295.0 540.8,295.3 541.1,295.5 541.3,295.7 541.6,295.8 541.8,296.0 542.0,296.1 542.1,296.2 542.2,296.3 542.3,296.4 542.4,296.4 542.5,296.5 542.5,296.5"/></clipPath><linearGradient id="fl" gradientUnits="userSpaceOnUse" x1="-0.4" y1="-0.0" x2="-0.4" y2="433.4"><stop offset="0" stop-color="#009900" stop-opacity="1"/><stop offset="0.45" stop-color="#009910" stop-opacity="1"/><stop offset="0.53" stop-color="#009a60" stop-opacity="1"/><stop offset="0.6" stop-color="#009a9a" stop-opacity="1"/><stop offset="0.68" stop-color="#005a9a" stop-opacity="1"/><stop offset="0.85" stop-color="#0010a0" stop-opacity="1"/><stop offset="1" stop-color="#0000a0" stop-opacity="1"/></linearGradient><linearGradient id="fu" gradientUnits="userSpaceOnUse" x1="221.3" y1="123.8" x2="472.6" y2="263.1"><stop offset="0" stop-color="#009900" stop-opacity="1"/><stop offset="0.35" stop-color="#8a9a00" stop-opacity="1"/><stop offset="0.6" stop-color="#995000" stop-opacity="1"/><stop offset="1" stop-color="#990000" stop-opacity="1"/></linearGradient><linearGradient id="fb" gradientUnits="userSpaceOnUse" x1="110.5" y1="402.4" x2="472.6" y2="263.1"><stop offset="0" stop-color="#0000a0" stop-opacity="1"/><stop offset="0.3" stop-color="#5000a0" stop-opacity="1"/><stop offset="0.6" stop-color="#990070" stop-opacity="1"/><stop offset="1" stop-color="#990010" stop-opacity="1"/></linearGradient><linearGradient id="t1e" gradientUnits="userSpaceOnUse" x1="472.6" y1="263.1" x2="309.5" y2="172.7"><stop offset="0" stop-color="#ff0000" stop-opacity="1"/><stop offset="1" stop-color="#ffff00" stop-opacity="1"/></linearGradient><linearGradient id="t1w" gradientUnits="userSpaceOnUse" x1="230.7" y1="263.6" x2="287.8" y2="160.7"><stop offset="0" stop-color="#fff" stop-opacity="1"/><stop offset="0.45" stop-color="#fff" stop-opacity="0.35"/><stop offset="1" stop-color="#fff" stop-opacity="0"/></linearGradient><linearGradient id="t2e" gradientUnits="userSpaceOnUse" x1="309.5" y1="172.7" x2="221.3" y2="123.8"><stop offset="0" stop-color="#ffff00" stop-opacity="1"/><stop offset="1" stop-color="#00ff00" stop-opacity="1"/></linearGradient><linearGradient id="t2w" gradientUnits="userSpaceOnUse" x1="230.7" y1="263.6" x2="287.8" y2="160.6"><stop offset="0" stop-color="#fff" stop-opacity="1"/><stop offset="0.45" stop-color="#fff" stop-opacity="0.35"/><stop offset="1" stop-color="#fff" stop-opacity="0"/></linearGradient><linearGradient id="t3e" gradientUnits="userSpaceOnUse" x1="221.3" y1="123.8" x2="165.7" y2="263.8"><stop offset="0" stop-color="#00ff00" stop-opacity="1"/><stop offset="1" stop-color="#00ffff" stop-opacity="1"/></linearGradient><linearGradient id="t3w" gradientUnits="userSpaceOnUse" x1="230.7" y1="263.6" x2="174.6" y2="241.3"><stop offset="0" stop-color="#fff" stop-opacity="1"/><stop offset="0.45" stop-color="#fff" stop-opacity="0.35"/><stop offset="1" stop-color="#fff" stop-opacity="0"/></linearGradient><linearGradient id="t4e" gradientUnits="userSpaceOnUse" x1="165.7" y1="263.8" x2="110.5" y2="402.4"><stop offset="0" stop-color="#00ffff" stop-opacity="1"/><stop offset="1" stop-color="#0000ff" stop-opacity="1"/></linearGradient><linearGradient id="t4w" gradientUnits="userSpaceOnUse" x1="230.7" y1="263.6" x2="174.6" y2="241.3"><stop offset="0" stop-color="#fff" stop-opacity="1"/><stop offset="0.45" stop-color="#fff" stop-opacity="0.35"/><stop offset="1" stop-color="#fff" stop-opacity="0"/></linearGradient><linearGradient id="t5e" gradientUnits="userSpaceOnUse" x1="110.5" y1="402.4" x2="236.7" y2="353.8"><stop offset="0" stop-color="#0000ff" stop-opacity="1"/><stop offset="1" stop-color="#ff00ff" stop-opacity="1"/></linearGradient><linearGradient id="t5w" gradientUnits="userSpaceOnUse" x1="230.7" y1="263.6" x2="261.7" y2="344.2"><stop offset="0" stop-color="#fff" stop-opacity="1"/><stop offset="0.45" stop-color="#fff" stop-opacity="0.35"/><stop offset="1" stop-color="#fff" stop-opacity="0"/></linearGradient><linearGradient id="t6e" gradientUnits="userSpaceOnUse" x1="236.7" y1="353.8" x2="472.6" y2="263.1"><stop offset="0" stop-color="#ff00ff" stop-opacity="1"/><stop offset="1" stop-color="#ff0000" stop-opacity="1"/></linearGradient><linearGradient id="t6w" gradientUnits="userSpaceOnUse" x1="230.7" y1="263.6" x2="261.7" y2="344.2"><stop offset="0" stop-color="#fff" stop-opacity="1"/><stop offset="0.45" stop-color="#fff" stop-opacity="0.35"/><stop offset="1" stop-color="#fff" stop-opacity="0"/></linearGradient></defs>
<g clip-path="url(#lcp)"><rect x="0" y="0" width="620" height="434" fill="url(#fl)"/><polygon points="221.3,123.8 211.7,-15.5 620.4,-15.5 620.4,263.1 472.6,263.1" fill="url(#fu)"/><polygon points="110.5,402.4 73.5,433.4 620.4,433.4 620.4,263.1 472.6,263.1" fill="url(#fb)"/><polygon points="230.7,263.6 472.6,263.1 309.5,172.7" fill="url(#t1e)"/><polygon points="230.7,263.6 472.6,263.1 309.5,172.7" fill="url(#t1w)"/><polygon points="230.7,263.6 309.5,172.7 221.3,123.8" fill="url(#t2e)"/><polygon points="230.7,263.6 309.5,172.7 221.3,123.8" fill="url(#t2w)"/><polygon points="230.7,263.6 221.3,123.8 165.7,263.8" fill="url(#t3e)"/><polygon points="230.7,263.6 221.3,123.8 165.7,263.8" fill="url(#t3w)"/><polygon points="230.7,263.6 165.7,263.8 110.5,402.4" fill="url(#t4e)"/><polygon points="230.7,263.6 165.7,263.8 110.5,402.4" fill="url(#t4w)"/><polygon points="230.7,263.6 110.5,402.4 236.7,353.8" fill="url(#t5e)"/><polygon points="230.7,263.6 110.5,402.4 236.7,353.8" fill="url(#t5w)"/><polygon points="230.7,263.6 236.7,353.8 472.6,263.1" fill="url(#t6e)"/><polygon points="230.7,263.6 236.7,353.8 472.6,263.1" fill="url(#t6w)"/></g></svg>
<canvas id="cie" width="620" height="434" style="position:absolute;left:969px;top:128px"></canvas>
<div style="position:absolute;left:1371px;top:131px;width:215px;height:167px;background:#1e1e1e"></div>
<div style="position:absolute;left:1373px;top:133px;width:211px;height:163px;box-sizing:border-box;border:1px solid #a0a0a0;background:linear-gradient(135deg,#6a9000,#909000 50%,#906800)"></div>
<svg style="position:absolute;left:1374px;top:134px" width="209" height="161"><defs><linearGradient id="insg" x1="0" y1="0" x2="1" y2="1"><stop offset="0" stop-color="#b8ff00"/><stop offset="0.5" stop-color="#ffff00"/><stop offset="1" stop-color="#ffb000"/></linearGradient></defs><polygon points="0,16.6 209,145 209,161 0,161" fill="url(#insg)"/></svg>
<canvas id="ins" width="209" height="161" style="position:absolute;left:1374px;top:134px"></canvas>
<svg style="position:absolute;left:0;top:0" width="1600" height="870"><rect x="1257.4" y="365.8" width="12" height="12" fill="none" stroke="#fff" stroke-width="1.6"/><rect x="1241.8" y="370.4" width="12" height="12" fill="none" stroke="#fff" stroke-width="1.6"/><rect x="1146.0" y="417.2" width="12" height="12" fill="none" stroke="#fff" stroke-width="1.6"/><rect x="1212.6" y="333.4" width="12" height="12" fill="none" stroke="#fff" stroke-width="1.6"/><rect x="1159.3" y="423.0" width="12" height="12" fill="none" stroke="#fff" stroke-width="1.6"/><rect x="1155.1" y="368.3" width="12" height="12" fill="none" stroke="#fff" stroke-width="1.6"/><rect x="1340.9" y="344.5" width="12" height="12" fill="none" stroke="#fff" stroke-width="1.6"/><rect x="1121.8" y="455.1" width="12" height="12" fill="none" stroke="#fff" stroke-width="1.6"/><rect x="1302.7" y="393.2" width="12" height="12" fill="none" stroke="#fff" stroke-width="1.6"/><rect x="1176.3" y="440.2" width="12" height="12" fill="none" stroke="#fff" stroke-width="1.6"/><rect x="1239.1" y="299.6" width="12" height="12" fill="none" stroke="#fff" stroke-width="1.6"/><rect x="1311.9" y="327.2" width="12" height="12" fill="none" stroke="#fff" stroke-width="1.6"/><rect x="1103.4" y="482.3" width="12" height="12" fill="none" stroke="#fff" stroke-width="1.6"/><rect x="1187.1" y="301.2" width="12" height="12" fill="none" stroke="#fff" stroke-width="1.6"/><rect x="1358.8" y="391.4" width="12" height="12" fill="none" stroke="#fff" stroke-width="1.6"/><rect x="1292.4" y="309.3" width="12" height="12" fill="none" stroke="#fff" stroke-width="1.6"/><rect x="1237.9" y="427.4" width="12" height="12" fill="none" stroke="#fff" stroke-width="1.6"/><rect x="1114.9" y="415.6" width="12" height="12" fill="none" stroke="#fff" stroke-width="1.6"/><rect x="1434.8" y="383.7" width="12" height="12" fill="none" stroke="#fff" stroke-width="1.6"/><rect x="1183.0" y="245.0" width="12" height="12" fill="none" stroke="#fff" stroke-width="1.6"/><rect x="1071.9" y="523.0" width="12" height="12" fill="none" stroke="#fff" stroke-width="1.6"/><rect x="1127.8" y="385.3" width="12" height="12" fill="none" stroke="#fff" stroke-width="1.6"/><rect x="1198.4" y="474.7" width="12" height="12" fill="none" stroke="#fff" stroke-width="1.6"/><rect x="1271.9" y="293.9" width="12" height="12" fill="none" stroke="#fff" stroke-width="1.6"/><rect x="1193" y="386" width="13" height="11" fill="#fff" stroke="#000" stroke-width="2.2"/><ellipse cx="1168.5" cy="429.0" rx="4.2" ry="3.6" fill="#000" stroke="#000" stroke-width="1.1"/><ellipse cx="1254.3" cy="371.6" rx="4.2" ry="3.6" fill="#735244" stroke="#000" stroke-width="1.1"/><ellipse cx="1237.5" cy="377.8" rx="4.2" ry="3.6" fill="#c29682" stroke="#000" stroke-width="1.1"/><ellipse cx="1156.6" cy="416.3" rx="4.2" ry="3.6" fill="#627a9d" stroke="#000" stroke-width="1.1"/><ellipse cx="1225.5" cy="347.7" rx="4.2" ry="3.6" fill="#576c43" stroke="#000" stroke-width="1.1"/><ellipse cx="1166.4" cy="419.8" rx="4.2" ry="3.6" fill="#8580b1" stroke="#000" stroke-width="1.1"/><ellipse cx="1172.0" cy="378.9" rx="4.2" ry="3.6" fill="#67bdaa" stroke="#000" stroke-width="1.1"/><ellipse cx="1324.4" cy="351.1" rx="4.2" ry="3.6" fill="#d67e2c" stroke="#000" stroke-width="1.1"/><ellipse cx="1131.3" cy="444.6" rx="4.2" ry="3.6" fill="#505ba6" stroke="#000" stroke-width="1.1"/><ellipse cx="1278.9" cy="393.4" rx="4.2" ry="3.6" fill="#c15a63" stroke="#000" stroke-width="1.1"/><ellipse cx="1164.6" cy="435.4" rx="4.2" ry="3.6" fill="#5e3c6c" stroke="#000" stroke-width="1.1"/><ellipse cx="1256.3" cy="316.9" rx="4.2" ry="3.6" fill="#9dbc40" stroke="#000" stroke-width="1.1"/><ellipse cx="1306.4" cy="338.3" rx="4.2" ry="3.6" fill="#e0a32e" stroke="#000" stroke-width="1.1"/><ellipse cx="1114.5" cy="465.3" rx="4.2" ry="3.6" fill="#383d96" stroke="#000" stroke-width="1.1"/><ellipse cx="1212.4" cy="317.8" rx="4.2" ry="3.6" fill="#469449" stroke="#000" stroke-width="1.1"/><ellipse cx="1323.4" cy="390.7" rx="4.2" ry="3.6" fill="#af363c" stroke="#000" stroke-width="1.1"/><ellipse cx="1295.9" cy="322.9" rx="4.2" ry="3.6" fill="#e7c71f" stroke="#000" stroke-width="1.1"/><ellipse cx="1221.4" cy="419.8" rx="4.2" ry="3.6" fill="#bb5695" stroke="#000" stroke-width="1.1"/><ellipse cx="1131.7" cy="417.0" rx="4.2" ry="3.6" fill="#0885a1" stroke="#000" stroke-width="1.1"/><ellipse cx="1382.2" cy="382.8" rx="4.2" ry="3.6" fill="#ff0000" stroke="#000" stroke-width="1.1"/><ellipse cx="1222.4" cy="263.8" rx="4.2" ry="3.6" fill="#00ff00" stroke="#000" stroke-width="1.1"/><ellipse cx="1087.6" cy="493.8" rx="4.2" ry="3.6" fill="#0000ff" stroke="#000" stroke-width="1.1"/><ellipse cx="1147.4" cy="392.4" rx="4.2" ry="3.6" fill="#00ffff" stroke="#000" stroke-width="1.1"/><ellipse cx="1185.3" cy="456.8" rx="4.2" ry="3.6" fill="#ff00ff" stroke="#000" stroke-width="1.1"/><ellipse cx="1284.6" cy="309.5" rx="4.2" ry="3.6" fill="#ffff00" stroke="#000" stroke-width="1.1"/><ellipse cx="1198.6" cy="390.2" rx="3.6" ry="3.2" fill="#a0a0a0" stroke="#000" stroke-width="1.1"/><rect x="1470.8" y="208.3" width="12" height="12" fill="none" stroke="#fff" stroke-width="1.6"/><ellipse cx="1510.7" cy="274" rx="4.4" ry="3.5" fill="#ffff00" stroke="#000" stroke-width="1.1"/></svg>
<div style="position:absolute;left:1345px;top:532px;width:241px;height:24px;background:#2c2c2c"></div>
<div style="position:absolute;left:1344.50px;top:536.13px;font-size:17.8px;line-height:17.8px;color:#f0f0f0;white-space:nowrap;transform:scaleX(1.0682);transform-origin:0 0;">RGB Triplet: 255, 255, 0</div>
<div style="position:absolute;left:308px;top:605px;width:1290px;height:198px;overflow:hidden">
<div style="position:absolute;left:0;top:0;width:1292px;height:13px;background:#2e2e2e"></div>
<div style="position:absolute;left:0;top:13px;width:1292px;height:12px;background:#171717"></div>
<div style="position:absolute;left:0;top:0;width:10px;height:25px;background:#000"></div>
<div style="position:absolute;left:86.2px;top:5.7px;font-size:13.2px;color:#f4f4f4;white-space:nowrap;transform:scaleX(0.74);transform-origin:0 0">White</div>
<div style="position:absolute;left:124.5px;top:5.7px;font-size:13.2px;color:#f4f4f4;white-space:nowrap;transform:scaleX(0.74);transform-origin:0 0">Gray 80</div>
<div style="position:absolute;left:163.9px;top:5.7px;font-size:13.2px;color:#f4f4f4;white-space:nowrap;transform:scaleX(0.74);transform-origin:0 0">Gray 65</div>
<div style="position:absolute;left:203.6px;top:5.7px;font-size:13.2px;color:#f4f4f4;white-space:nowrap;transform:scaleX(0.74);transform-origin:0 0">Gray 50</div>
<div style="position:absolute;left:243.0px;top:5.7px;font-size:13.2px;color:#f4f4f4;white-space:nowrap;transform:scaleX(0.74);transform-origin:0 0">Gray 35</div>
<div style="position:absolute;left:282.7px;top:5.7px;font-size:13.2px;color:#f4f4f4;white-space:nowrap;transform:scaleX(0.74);transform-origin:0 0">Black</div>
<div style="position:absolute;left:311.2px;top:5.7px;font-size:13.2px;color:#f4f4f4;white-space:nowrap;transform:scaleX(0.74);transform-origin:0 0">Dark Skin</div>
<div style="position:absolute;left:358.0px;top:5.7px;font-size:13.2px;color:#f4f4f4;white-space:nowrap;transform:scaleX(0.74);transform-origin:0 0">Light Skin</div>
<div style="position:absolute;left:406.5px;top:5.7px;font-size:13.2px;color:#f4f4f4;white-space:nowrap;transform:scaleX(0.74);transform-origin:0 0">Blue Sky</div>
<div style="position:absolute;left:448.8px;top:5.7px;font-size:13.2px;color:#f4f4f4;white-space:nowrap;transform:scaleX(0.74);transform-origin:0 0">Foliage</div>
<div style="position:absolute;left:485.6px;top:5.7px;font-size:13.2px;color:#f4f4f4;white-space:nowrap;transform:scaleX(0.74);transform-origin:0 0">Blue Flower</div>
<div style="position:absolute;left:543.7px;top:5.7px;font-size:13.2px;color:#f4f4f4;white-space:nowrap;transform:scaleX(0.74);transform-origin:0 0">Bluish Green</div>
<div style="position:absolute;left:606.0px;top:5.7px;font-size:13.2px;color:#f4f4f4;white-space:nowrap;transform:scaleX(0.74);transform-origin:0 0">Orange</div>
<div style="position:absolute;left:643.6px;top:5.7px;font-size:13.2px;color:#f4f4f4;white-space:nowrap;transform:scaleX(0.74);transform-origin:0 0">Purplish Blue</div>
<div style="position:absolute;left:707.0px;top:5.7px;font-size:13.2px;color:#f4f4f4;white-space:nowrap;transform:scaleX(0.74);transform-origin:0 0">Moderate Red</div>
<div style="position:absolute;left:776.2px;top:5.7px;font-size:13.2px;color:#f4f4f4;white-space:nowrap;transform:scaleX(0.74);transform-origin:0 0">Purple</div>
<div style="position:absolute;left:810.7px;top:5.7px;font-size:13.2px;color:#f4f4f4;white-space:nowrap;transform:scaleX(0.74);transform-origin:0 0">Yellow Green</div>
<div style="position:absolute;left:874.6px;top:5.7px;font-size:13.2px;color:#f4f4f4;white-space:nowrap;transform:scaleX(0.74);transform-origin:0 0">Orange Yellow</div>
<div style="position:absolute;left:943.3px;top:5.7px;font-size:13.2px;color:#f4f4f4;white-space:nowrap;transform:scaleX(0.74);transform-origin:0 0">Blue</div>
<div style="position:absolute;left:975.6px;top:5.7px;font-size:13.2px;color:#f4f4f4;white-space:nowrap;transform:scaleX(0.74);transform-origin:0 0">Green</div>
<div style="position:absolute;left:1008.5px;top:5.7px;font-size:13.2px;color:#f4f4f4;white-space:nowrap;transform:scaleX(0.74);transform-origin:0 0">Red</div>
<div style="position:absolute;left:1041.3px;top:5.7px;font-size:13.2px;color:#f4f4f4;white-space:nowrap;transform:scaleX(0.74);transform-origin:0 0">Yellow</div>
<div style="position:absolute;left:1079.3px;top:5.7px;font-size:13.2px;color:#f4f4f4;white-space:nowrap;transform:scaleX(0.74);transform-origin:0 0">Magenta</div>
<div style="position:absolute;left:1124.4px;top:5.7px;font-size:13.2px;color:#f4f4f4;white-space:nowrap;transform:scaleX(0.74);transform-origin:0 0">Cyan</div>
<div style="position:absolute;left:1156.7px;top:5.7px;font-size:13.2px;color:#f4f4f4;white-space:nowrap;transform:scaleX(0.74);transform-origin:0 0">100% Red</div>
<div style="position:absolute;left:1206.6px;top:5.7px;font-size:13.2px;color:#f4f4f4;white-space:nowrap;transform:scaleX(0.74);transform-origin:0 0">100% Green</div>
<div style="position:absolute;left:1265.7px;top:5.7px;font-size:13.2px;color:#f4f4f4;white-space:nowrap;transform:scaleX(0.74);transform-origin:0 0">100% Blue</div>
<div style="position:absolute;left:10px;top:25.00px;width:1282px;height:22.75px;background:#434343"></div>
<div style="position:absolute;left:0;top:25.00px;width:10px;height:22.75px;background:linear-gradient(#262626,#2c2c2c 50%,#262626);border-bottom:1px solid #1c1c1c;box-sizing:border-box"></div>
<div style="position:absolute;left:12.0px;top:28.5px;font-size:14.8px;color:#ececec;white-space:nowrap;transform:scaleX(0.695);transform-origin:0 0">x: CIE31</div>
<div style="position:absolute;left:86.2px;top:28.5px;font-size:14.8px;color:#ececec;white-space:nowrap;transform:scaleX(0.695);transform-origin:0 0">0.31</div>
<div style="position:absolute;left:124.5px;top:28.5px;font-size:14.8px;color:#ececec;white-space:nowrap;transform:scaleX(0.695);transform-origin:0 0">0.31</div>
<div style="position:absolute;left:163.9px;top:28.5px;font-size:14.8px;color:#ececec;white-space:nowrap;transform:scaleX(0.695);transform-origin:0 0">0.31</div>
<div style="position:absolute;left:203.6px;top:28.5px;font-size:14.8px;color:#ececec;white-space:nowrap;transform:scaleX(0.695);transform-origin:0 0">0.31</div>
<div style="position:absolute;left:243.0px;top:28.5px;font-size:14.8px;color:#ececec;white-space:nowrap;transform:scaleX(0.695);transform-origin:0 0">0.31</div>
<div style="position:absolute;left:282.7px;top:28.5px;font-size:14.8px;color:#ececec;white-space:nowrap;transform:scaleX(0.695);transform-origin:0 0">0.27</div>
<div style="position:absolute;left:311.2px;top:28.5px;font-size:14.8px;color:#ececec;white-space:nowrap;transform:scaleX(0.695);transform-origin:0 0">0.39</div>
<div style="position:absolute;left:358.0px;top:28.5px;font-size:14.8px;color:#ececec;white-space:nowrap;transform:scaleX(0.695);transform-origin:0 0">0.37</div>
<div style="position:absolute;left:406.5px;top:28.5px;font-size:14.8px;color:#ececec;white-space:nowrap;transform:scaleX(0.695);transform-origin:0 0">0.26</div>
<div style="position:absolute;left:448.8px;top:28.5px;font-size:14.8px;color:#ececec;white-space:nowrap;transform:scaleX(0.695);transform-origin:0 0">0.35</div>
<div style="position:absolute;left:485.6px;top:28.5px;font-size:14.8px;color:#ececec;white-space:nowrap;transform:scaleX(0.695);transform-origin:0 0">0.27</div>
<div style="position:absolute;left:543.7px;top:28.5px;font-size:14.8px;color:#ececec;white-space:nowrap;transform:scaleX(0.695);transform-origin:0 0">0.28</div>
<div style="position:absolute;left:606.0px;top:28.5px;font-size:14.8px;color:#ececec;white-space:nowrap;transform:scaleX(0.695);transform-origin:0 0">0.48</div>
<div style="position:absolute;left:643.6px;top:28.5px;font-size:14.8px;color:#ececec;white-space:nowrap;transform:scaleX(0.695);transform-origin:0 0">0.22</div>
<div style="position:absolute;left:707.0px;top:28.5px;font-size:14.8px;color:#ececec;white-space:nowrap;transform:scaleX(0.695);transform-origin:0 0">0.42</div>
<div style="position:absolute;left:776.2px;top:28.5px;font-size:14.8px;color:#ececec;white-space:nowrap;transform:scaleX(0.695);transform-origin:0 0">0.27</div>
<div style="position:absolute;left:810.7px;top:28.5px;font-size:14.8px;color:#ececec;white-space:nowrap;transform:scaleX(0.695);transform-origin:0 0">0.39</div>
<div style="position:absolute;left:874.6px;top:28.5px;font-size:14.8px;color:#ececec;white-space:nowrap;transform:scaleX(0.695);transform-origin:0 0">0.46</div>
<div style="position:absolute;left:943.3px;top:28.5px;font-size:14.8px;color:#ececec;white-space:nowrap;transform:scaleX(0.695);transform-origin:0 0">0.20</div>
<div style="position:absolute;left:975.6px;top:28.5px;font-size:14.8px;color:#ececec;white-space:nowrap;transform:scaleX(0.695);transform-origin:0 0">0.33</div>
<div style="position:absolute;left:1008.5px;top:28.5px;font-size:14.8px;color:#ececec;white-space:nowrap;transform:scaleX(0.695);transform-origin:0 0">0.48</div>
<div style="position:absolute;left:1041.3px;top:28.5px;font-size:14.8px;color:#ececec;white-space:nowrap;transform:scaleX(0.695);transform-origin:0 0">0.44</div>
<div style="position:absolute;left:1079.3px;top:28.5px;font-size:14.8px;color:#ececec;white-space:nowrap;transform:scaleX(0.695);transform-origin:0 0">0.34</div>
<div style="position:absolute;left:1124.4px;top:28.5px;font-size:14.8px;color:#ececec;white-space:nowrap;transform:scaleX(0.695);transform-origin:0 0">0.22</div>
<div style="position:absolute;left:1156.7px;top:28.5px;font-size:14.8px;color:#ececec;white-space:nowrap;transform:scaleX(0.695);transform-origin:0 0">0.56</div>
<div style="position:absolute;left:1206.6px;top:28.5px;font-size:14.8px;color:#ececec;white-space:nowrap;transform:scaleX(0.695);transform-origin:0 0">0.34</div>
<div style="position:absolute;left:1265.7px;top:28.5px;font-size:14.8px;color:#ececec;white-space:nowrap;transform:scaleX(0.695);transform-origin:0 0">0.16</div>
<div style="position:absolute;left:10px;top:47.75px;width:1282px;height:22.75px;background:#808080"></div>
<div style="position:absolute;left:0;top:47.75px;width:10px;height:22.75px;background:linear-gradient(#262626,#2c2c2c 50%,#262626);border-bottom:1px solid #1c1c1c;box-sizing:border-box"></div>
<div style="position:absolute;left:12.0px;top:51.2px;font-size:14.8px;color:#ececec;white-space:nowrap;transform:scaleX(0.695);transform-origin:0 0">y: CIE31</div>
<div style="position:absolute;left:86.2px;top:51.2px;font-size:14.8px;color:#ececec;white-space:nowrap;transform:scaleX(0.695);transform-origin:0 0">0.33</div>
<div style="position:absolute;left:124.5px;top:51.2px;font-size:14.8px;color:#ececec;white-space:nowrap;transform:scaleX(0.695);transform-origin:0 0">0.33</div>
<div style="position:absolute;left:163.9px;top:51.2px;font-size:14.8px;color:#ececec;white-space:nowrap;transform:scaleX(0.695);transform-origin:0 0">0.33</div>
<div style="position:absolute;left:203.6px;top:51.2px;font-size:14.8px;color:#ececec;white-space:nowrap;transform:scaleX(0.695);transform-origin:0 0">0.33</div>
<div style="position:absolute;left:243.0px;top:51.2px;font-size:14.8px;color:#ececec;white-space:nowrap;transform:scaleX(0.695);transform-origin:0 0">0.33</div>
<div style="position:absolute;left:282.7px;top:51.2px;font-size:14.8px;color:#ececec;white-space:nowrap;transform:scaleX(0.695);transform-origin:0 0">0.25</div>
<div style="position:absolute;left:311.2px;top:51.2px;font-size:14.8px;color:#ececec;white-space:nowrap;transform:scaleX(0.695);transform-origin:0 0">0.37</div>
<div style="position:absolute;left:358.0px;top:51.2px;font-size:14.8px;color:#ececec;white-space:nowrap;transform:scaleX(0.695);transform-origin:0 0">0.35</div>
<div style="position:absolute;left:406.5px;top:51.2px;font-size:14.8px;color:#ececec;white-space:nowrap;transform:scaleX(0.695);transform-origin:0 0">0.28</div>
<div style="position:absolute;left:448.8px;top:51.2px;font-size:14.8px;color:#ececec;white-space:nowrap;transform:scaleX(0.695);transform-origin:0 0">0.41</div>
<div style="position:absolute;left:485.6px;top:51.2px;font-size:14.8px;color:#ececec;white-space:nowrap;transform:scaleX(0.695);transform-origin:0 0">0.27</div>
<div style="position:absolute;left:543.7px;top:51.2px;font-size:14.8px;color:#ececec;white-space:nowrap;transform:scaleX(0.695);transform-origin:0 0">0.35</div>
<div style="position:absolute;left:606.0px;top:51.2px;font-size:14.8px;color:#ececec;white-space:nowrap;transform:scaleX(0.695);transform-origin:0 0">0.40</div>
<div style="position:absolute;left:643.6px;top:51.2px;font-size:14.8px;color:#ececec;white-space:nowrap;transform:scaleX(0.695);transform-origin:0 0">0.22</div>
<div style="position:absolute;left:707.0px;top:51.2px;font-size:14.8px;color:#ececec;white-space:nowrap;transform:scaleX(0.695);transform-origin:0 0">0.32</div>
<div style="position:absolute;left:776.2px;top:51.2px;font-size:14.8px;color:#ececec;white-space:nowrap;transform:scaleX(0.695);transform-origin:0 0">0.24</div>
<div style="position:absolute;left:810.7px;top:51.2px;font-size:14.8px;color:#ececec;white-space:nowrap;transform:scaleX(0.695);transform-origin:0 0">0.47</div>
<div style="position:absolute;left:874.6px;top:51.2px;font-size:14.8px;color:#ececec;white-space:nowrap;transform:scaleX(0.695);transform-origin:0 0">0.43</div>
<div style="position:absolute;left:943.3px;top:51.2px;font-size:14.8px;color:#ececec;white-space:nowrap;transform:scaleX(0.695);transform-origin:0 0">0.18</div>
<div style="position:absolute;left:975.6px;top:51.2px;font-size:14.8px;color:#ececec;white-space:nowrap;transform:scaleX(0.695);transform-origin:0 0">0.47</div>
<div style="position:absolute;left:1008.5px;top:51.2px;font-size:14.8px;color:#ececec;white-space:nowrap;transform:scaleX(0.695);transform-origin:0 0">0.33</div>
<div style="position:absolute;left:1041.3px;top:51.2px;font-size:14.8px;color:#ececec;white-space:nowrap;transform:scaleX(0.695);transform-origin:0 0">0.46</div>
<div style="position:absolute;left:1079.3px;top:51.2px;font-size:14.8px;color:#ececec;white-space:nowrap;transform:scaleX(0.695);transform-origin:0 0">0.27</div>
<div style="position:absolute;left:1124.4px;top:51.2px;font-size:14.8px;color:#ececec;white-space:nowrap;transform:scaleX(0.695);transform-origin:0 0">0.28</div>
<div style="position:absolute;left:1156.7px;top:51.2px;font-size:14.8px;color:#ececec;white-space:nowrap;transform:scaleX(0.695);transform-origin:0 0">0.34</div>
<div style="position:absolute;left:1206.6px;top:51.2px;font-size:14.8px;color:#ececec;white-space:nowrap;transform:scaleX(0.695);transform-origin:0 0">0.57</div>
<div style="position:absolute;left:1265.7px;top:51.2px;font-size:14.8px;color:#ececec;white-space:nowrap;transform:scaleX(0.695);transform-origin:0 0">0.13</div>
<div style="position:absolute;left:10px;top:70.50px;width:1282px;height:22.75px;background:#434343"></div>
<div style="position:absolute;left:0;top:70.50px;width:10px;height:22.75px;background:linear-gradient(#262626,#2c2c2c 50%,#262626);border-bottom:1px solid #1c1c1c;box-sizing:border-box"></div>
<div style="position:absolute;left:12.0px;top:74.0px;font-size:14.8px;color:#ececec;white-space:nowrap;transform:scaleX(0.695);transform-origin:0 0">Y</div>
<div style="position:absolute;left:86.2px;top:74.0px;font-size:14.8px;color:#ececec;white-space:nowrap;transform:scaleX(0.695);transform-origin:0 0">209.82</div>
<div style="position:absolute;left:124.5px;top:74.0px;font-size:14.8px;color:#ececec;white-space:nowrap;transform:scaleX(0.695);transform-origin:0 0">168.49</div>
<div style="position:absolute;left:163.9px;top:74.0px;font-size:14.8px;color:#ececec;white-space:nowrap;transform:scaleX(0.695);transform-origin:0 0">136.76</div>
<div style="position:absolute;left:203.6px;top:74.0px;font-size:14.8px;color:#ececec;white-space:nowrap;transform:scaleX(0.695);transform-origin:0 0">103.77</div>
<div style="position:absolute;left:243.0px;top:74.0px;font-size:14.8px;color:#ececec;white-space:nowrap;transform:scaleX(0.695);transform-origin:0 0">73.24</div>
<div style="position:absolute;left:282.7px;top:74.0px;font-size:14.8px;color:#ececec;white-space:nowrap;transform:scaleX(0.695);transform-origin:0 0">0.17</div>
<div style="position:absolute;left:311.2px;top:74.0px;font-size:14.8px;color:#ececec;white-space:nowrap;transform:scaleX(0.695);transform-origin:0 0">20.21</div>
<div style="position:absolute;left:358.0px;top:74.0px;font-size:14.8px;color:#ececec;white-space:nowrap;transform:scaleX(0.695);transform-origin:0 0">74.12</div>
<div style="position:absolute;left:406.5px;top:74.0px;font-size:14.8px;color:#ececec;white-space:nowrap;transform:scaleX(0.695);transform-origin:0 0">42.88</div>
<div style="position:absolute;left:448.8px;top:74.0px;font-size:14.8px;color:#ececec;white-space:nowrap;transform:scaleX(0.695);transform-origin:0 0">24.58</div>
<div style="position:absolute;left:485.6px;top:74.0px;font-size:14.8px;color:#ececec;white-space:nowrap;transform:scaleX(0.695);transform-origin:0 0">55.26</div>
<div style="position:absolute;left:543.7px;top:74.0px;font-size:14.8px;color:#ececec;white-space:nowrap;transform:scaleX(0.695);transform-origin:0 0">84.08</div>
<div style="position:absolute;left:606.0px;top:74.0px;font-size:14.8px;color:#ececec;white-space:nowrap;transform:scaleX(0.695);transform-origin:0 0">57.67</div>
<div style="position:absolute;left:643.6px;top:74.0px;font-size:14.8px;color:#ececec;white-space:nowrap;transform:scaleX(0.695);transform-origin:0 0">30.47</div>
<div style="position:absolute;left:707.0px;top:74.0px;font-size:14.8px;color:#ececec;white-space:nowrap;transform:scaleX(0.695);transform-origin:0 0">41.33</div>
<div style="position:absolute;left:776.2px;top:74.0px;font-size:14.8px;color:#ececec;white-space:nowrap;transform:scaleX(0.695);transform-origin:0 0">14.91</div>
<div style="position:absolute;left:810.7px;top:74.0px;font-size:14.8px;color:#ececec;white-space:nowrap;transform:scaleX(0.695);transform-origin:0 0">79.51</div>
<div style="position:absolute;left:872px;top:72.0px;width:68px;height:21px;background:#f0f0f0"></div>
<div style="position:absolute;left:874.6px;top:74.0px;font-size:14.8px;color:#333;white-space:nowrap;transform:scaleX(0.695);transform-origin:0 0">85.56</div>
<div style="position:absolute;left:943.3px;top:74.0px;font-size:14.8px;color:#ececec;white-space:nowrap;transform:scaleX(0.695);transform-origin:0 0">18.17</div>
<div style="position:absolute;left:975.6px;top:74.0px;font-size:14.8px;color:#ececec;white-space:nowrap;transform:scaleX(0.695);transform-origin:0 0">42.00</div>
<div style="position:absolute;left:1008.5px;top:74.0px;font-size:14.8px;color:#ececec;white-space:nowrap;transform:scaleX(0.695);transform-origin:0 0">25.08</div>
<div style="position:absolute;left:1041.3px;top:74.0px;font-size:14.8px;color:#ececec;white-space:nowrap;transform:scaleX(0.695);transform-origin:0 0">112.15</div>
<div style="position:absolute;left:1079.3px;top:74.0px;font-size:14.8px;color:#ececec;white-space:nowrap;transform:scaleX(0.695);transform-origin:0 0">44.87</div>
<div style="position:absolute;left:1124.4px;top:74.0px;font-size:14.8px;color:#ececec;white-space:nowrap;transform:scaleX(0.695);transform-origin:0 0">40.97</div>
<div style="position:absolute;left:1156.7px;top:74.0px;font-size:14.8px;color:#ececec;white-space:nowrap;transform:scaleX(0.695);transform-origin:0 0">45.81</div>
<div style="position:absolute;left:1206.6px;top:74.0px;font-size:14.8px;color:#ececec;white-space:nowrap;transform:scaleX(0.695);transform-origin:0 0">123.40</div>
<div style="position:absolute;left:1265.7px;top:74.0px;font-size:14.8px;color:#ececec;white-space:nowrap;transform:scaleX(0.695);transform-origin:0 0">34.66</div>
<div style="position:absolute;left:10px;top:93.25px;width:1282px;height:22.75px;background:#808080"></div>
<div style="position:absolute;left:0;top:93.25px;width:10px;height:22.75px;background:linear-gradient(#262626,#2c2c2c 50%,#262626);border-bottom:1px solid #1c1c1c;box-sizing:border-box"></div>
<div style="position:absolute;left:12.0px;top:96.8px;font-size:14.8px;color:#ececec;white-space:nowrap;transform:scaleX(0.695);transform-origin:0 0">Target x:CIE31</div>
<div style="position:absolute;left:86.2px;top:96.8px;font-size:14.8px;color:#ececec;white-space:nowrap;transform:scaleX(0.695);transform-origin:0 0">0.31</div>
<div style="position:absolute;left:124.5px;top:96.8px;font-size:14.8px;color:#ececec;white-space:nowrap;transform:scaleX(0.695);transform-origin:0 0">0.31</div>
<div style="position:absolute;left:163.9px;top:96.8px;font-size:14.8px;color:#ececec;white-space:nowrap;transform:scaleX(0.695);transform-origin:0 0">0.31</div>
<div style="position:absolute;left:203.6px;top:96.8px;font-size:14.8px;color:#ececec;white-space:nowrap;transform:scaleX(0.695);transform-origin:0 0">0.31</div>
<div style="position:absolute;left:243.0px;top:96.8px;font-size:14.8px;color:#ececec;white-space:nowrap;transform:scaleX(0.695);transform-origin:0 0">0.31</div>
<div style="position:absolute;left:282.7px;top:96.8px;font-size:14.8px;color:#ececec;white-space:nowrap;transform:scaleX(0.695);transform-origin:0 0">0.31</div>
<div style="position:absolute;left:311.2px;top:96.8px;font-size:14.8px;color:#ececec;white-space:nowrap;transform:scaleX(0.695);transform-origin:0 0">0.40</div>
<div style="position:absolute;left:358.0px;top:96.8px;font-size:14.8px;color:#ececec;white-space:nowrap;transform:scaleX(0.695);transform-origin:0 0">0.38</div>
<div style="position:absolute;left:406.5px;top:96.8px;font-size:14.8px;color:#ececec;white-space:nowrap;transform:scaleX(0.695);transform-origin:0 0">0.25</div>
<div style="position:absolute;left:448.8px;top:96.8px;font-size:14.8px;color:#ececec;white-space:nowrap;transform:scaleX(0.695);transform-origin:0 0">0.34</div>
<div style="position:absolute;left:485.6px;top:96.8px;font-size:14.8px;color:#ececec;white-space:nowrap;transform:scaleX(0.695);transform-origin:0 0">0.27</div>
<div style="position:absolute;left:543.7px;top:96.8px;font-size:14.8px;color:#ececec;white-space:nowrap;transform:scaleX(0.695);transform-origin:0 0">0.26</div>
<div style="position:absolute;left:606.0px;top:96.8px;font-size:14.8px;color:#ececec;white-space:nowrap;transform:scaleX(0.695);transform-origin:0 0">0.51</div>
<div style="position:absolute;left:643.6px;top:96.8px;font-size:14.8px;color:#ececec;white-space:nowrap;transform:scaleX(0.695);transform-origin:0 0">0.22</div>
<div style="position:absolute;left:707.0px;top:96.8px;font-size:14.8px;color:#ececec;white-space:nowrap;transform:scaleX(0.695);transform-origin:0 0">0.46</div>
<div style="position:absolute;left:776.2px;top:96.8px;font-size:14.8px;color:#ececec;white-space:nowrap;transform:scaleX(0.695);transform-origin:0 0">0.29</div>
<div style="position:absolute;left:810.7px;top:96.8px;font-size:14.8px;color:#ececec;white-space:nowrap;transform:scaleX(0.695);transform-origin:0 0">0.38</div>
<div style="position:absolute;left:874.6px;top:96.8px;font-size:14.8px;color:#ececec;white-space:nowrap;transform:scaleX(0.695);transform-origin:0 0">0.47</div>
<div style="position:absolute;left:943.3px;top:96.8px;font-size:14.8px;color:#ececec;white-space:nowrap;transform:scaleX(0.695);transform-origin:0 0">0.19</div>
<div style="position:absolute;left:975.6px;top:96.8px;font-size:14.8px;color:#ececec;white-space:nowrap;transform:scaleX(0.695);transform-origin:0 0">0.31</div>
<div style="position:absolute;left:1008.5px;top:96.8px;font-size:14.8px;color:#ececec;white-space:nowrap;transform:scaleX(0.695);transform-origin:0 0">0.54</div>
<div style="position:absolute;left:1041.3px;top:96.8px;font-size:14.8px;color:#ececec;white-space:nowrap;transform:scaleX(0.695);transform-origin:0 0">0.45</div>
<div style="position:absolute;left:1079.3px;top:96.8px;font-size:14.8px;color:#ececec;white-space:nowrap;transform:scaleX(0.695);transform-origin:0 0">0.37</div>
<div style="position:absolute;left:1124.4px;top:96.8px;font-size:14.8px;color:#ececec;white-space:nowrap;transform:scaleX(0.695);transform-origin:0 0">0.21</div>
<div style="position:absolute;left:1156.7px;top:96.8px;font-size:14.8px;color:#ececec;white-space:nowrap;transform:scaleX(0.695);transform-origin:0 0">0.64</div>
<div style="position:absolute;left:1206.6px;top:96.8px;font-size:14.8px;color:#ececec;white-space:nowrap;transform:scaleX(0.695);transform-origin:0 0">0.30</div>
<div style="position:absolute;left:1265.7px;top:96.8px;font-size:14.8px;color:#ececec;white-space:nowrap;transform:scaleX(0.695);transform-origin:0 0">0.15</div>
<div style="position:absolute;left:10px;top:116.00px;width:1282px;height:22.75px;background:#434343"></div>
<div style="position:absolute;left:0;top:116.00px;width:10px;height:22.75px;background:linear-gradient(#262626,#2c2c2c 50%,#262626);border-bottom:1px solid #1c1c1c;box-sizing:border-box"></div>
<div style="position:absolute;left:12.0px;top:119.5px;font-size:14.8px;color:#ececec;white-space:nowrap;transform:scaleX(0.695);transform-origin:0 0">Target y:CIE31</div>
<div style="position:absolute;left:86.2px;top:119.5px;font-size:14.8px;color:#ececec;white-space:nowrap;transform:scaleX(0.695);transform-origin:0 0">0.33</div>
<div style="position:absolute;left:124.5px;top:119.5px;font-size:14.8px;color:#ececec;white-space:nowrap;transform:scaleX(0.695);transform-origin:0 0">0.33</div>
<div style="position:absolute;left:163.9px;top:119.5px;font-size:14.8px;color:#ececec;white-space:nowrap;transform:scaleX(0.695);transform-origin:0 0">0.33</div>
<div style="position:absolute;left:203.6px;top:119.5px;font-size:14.8px;color:#ececec;white-space:nowrap;transform:scaleX(0.695);transform-origin:0 0">0.33</div>
<div style="position:absolute;left:243.0px;top:119.5px;font-size:14.8px;color:#ececec;white-space:nowrap;transform:scaleX(0.695);transform-origin:0 0">0.33</div>
<div style="position:absolute;left:282.7px;top:119.5px;font-size:14.8px;color:#ececec;white-space:nowrap;transform:scaleX(0.695);transform-origin:0 0">0.33</div>
<div style="position:absolute;left:311.2px;top:119.5px;font-size:14.8px;color:#ececec;white-space:nowrap;transform:scaleX(0.695);transform-origin:0 0">0.36</div>
<div style="position:absolute;left:358.0px;top:119.5px;font-size:14.8px;color:#ececec;white-space:nowrap;transform:scaleX(0.695);transform-origin:0 0">0.36</div>
<div style="position:absolute;left:406.5px;top:119.5px;font-size:14.8px;color:#ececec;white-space:nowrap;transform:scaleX(0.695);transform-origin:0 0">0.27</div>
<div style="position:absolute;left:448.8px;top:119.5px;font-size:14.8px;color:#ececec;white-space:nowrap;transform:scaleX(0.695);transform-origin:0 0">0.43</div>
<div style="position:absolute;left:485.6px;top:119.5px;font-size:14.8px;color:#ececec;white-space:nowrap;transform:scaleX(0.695);transform-origin:0 0">0.25</div>
<div style="position:absolute;left:543.7px;top:119.5px;font-size:14.8px;color:#ececec;white-space:nowrap;transform:scaleX(0.695);transform-origin:0 0">0.36</div>
<div style="position:absolute;left:606.0px;top:119.5px;font-size:14.8px;color:#ececec;white-space:nowrap;transform:scaleX(0.695);transform-origin:0 0">0.41</div>
<div style="position:absolute;left:643.6px;top:119.5px;font-size:14.8px;color:#ececec;white-space:nowrap;transform:scaleX(0.695);transform-origin:0 0">0.19</div>
<div style="position:absolute;left:707.0px;top:119.5px;font-size:14.8px;color:#ececec;white-space:nowrap;transform:scaleX(0.695);transform-origin:0 0">0.31</div>
<div style="position:absolute;left:776.2px;top:119.5px;font-size:14.8px;color:#ececec;white-space:nowrap;transform:scaleX(0.695);transform-origin:0 0">0.22</div>
<div style="position:absolute;left:810.7px;top:119.5px;font-size:14.8px;color:#ececec;white-space:nowrap;transform:scaleX(0.695);transform-origin:0 0">0.49</div>
<div style="position:absolute;left:874.6px;top:119.5px;font-size:14.8px;color:#ececec;white-space:nowrap;transform:scaleX(0.695);transform-origin:0 0">0.44</div>
<div style="position:absolute;left:943.3px;top:119.5px;font-size:14.8px;color:#ececec;white-space:nowrap;transform:scaleX(0.695);transform-origin:0 0">0.14</div>
<div style="position:absolute;left:975.6px;top:119.5px;font-size:14.8px;color:#ececec;white-space:nowrap;transform:scaleX(0.695);transform-origin:0 0">0.49</div>
<div style="position:absolute;left:1008.5px;top:119.5px;font-size:14.8px;color:#ececec;white-space:nowrap;transform:scaleX(0.695);transform-origin:0 0">0.32</div>
<div style="position:absolute;left:1041.3px;top:119.5px;font-size:14.8px;color:#ececec;white-space:nowrap;transform:scaleX(0.695);transform-origin:0 0">0.47</div>
<div style="position:absolute;left:1079.3px;top:119.5px;font-size:14.8px;color:#ececec;white-space:nowrap;transform:scaleX(0.695);transform-origin:0 0">0.25</div>
<div style="position:absolute;left:1124.4px;top:119.5px;font-size:14.8px;color:#ececec;white-space:nowrap;transform:scaleX(0.695);transform-origin:0 0">0.27</div>
<div style="position:absolute;left:1156.7px;top:119.5px;font-size:14.8px;color:#ececec;white-space:nowrap;transform:scaleX(0.695);transform-origin:0 0">0.33</div>
<div style="position:absolute;left:1206.6px;top:119.5px;font-size:14.8px;color:#ececec;white-space:nowrap;transform:scaleX(0.695);transform-origin:0 0">0.60</div>
<div style="position:absolute;left:1265.7px;top:119.5px;font-size:14.8px;color:#ececec;white-space:nowrap;transform:scaleX(0.695);transform-origin:0 0">0.06</div>
<div style="position:absolute;left:10px;top:138.75px;width:1282px;height:22.75px;background:#808080"></div>
<div style="position:absolute;left:0;top:138.75px;width:10px;height:22.75px;background:linear-gradient(#262626,#2c2c2c 50%,#262626);border-bottom:1px solid #1c1c1c;box-sizing:border-box"></div>
<div style="position:absolute;left:12.0px;top:142.2px;font-size:14.8px;color:#ececec;white-space:nowrap;transform:scaleX(0.695);transform-origin:0 0">Target Y</div>
<div style="position:absolute;left:86.2px;top:142.2px;font-size:14.8px;color:#ececec;white-space:nowrap;transform:scaleX(0.695);transform-origin:0 0">209.82</div>
<div style="position:absolute;left:124.5px;top:142.2px;font-size:14.8px;color:#ececec;white-space:nowrap;transform:scaleX(0.695);transform-origin:0 0">166.03</div>
<div style="position:absolute;left:163.9px;top:142.2px;font-size:14.8px;color:#ececec;white-space:nowrap;transform:scaleX(0.695);transform-origin:0 0">133.78</div>
<div style="position:absolute;left:203.6px;top:142.2px;font-size:14.8px;color:#ececec;white-space:nowrap;transform:scaleX(0.695);transform-origin:0 0">103.03</div>
<div style="position:absolute;left:243.0px;top:142.2px;font-size:14.8px;color:#ececec;white-space:nowrap;transform:scaleX(0.695);transform-origin:0 0">71.74</div>
<div style="position:absolute;left:282.7px;top:142.2px;font-size:14.8px;color:#ececec;white-space:nowrap;transform:scaleX(0.695);transform-origin:0 0">0.00</div>
<div style="position:absolute;left:311.2px;top:142.2px;font-size:14.8px;color:#ececec;white-space:nowrap;transform:scaleX(0.695);transform-origin:0 0">21.14</div>
<div style="position:absolute;left:358.0px;top:142.2px;font-size:14.8px;color:#ececec;white-space:nowrap;transform:scaleX(0.695);transform-origin:0 0">73.22</div>
<div style="position:absolute;left:406.5px;top:142.2px;font-size:14.8px;color:#ececec;white-space:nowrap;transform:scaleX(0.695);transform-origin:0 0">39.23</div>
<div style="position:absolute;left:448.8px;top:142.2px;font-size:14.8px;color:#ececec;white-space:nowrap;transform:scaleX(0.695);transform-origin:0 0">27.35</div>
<div style="position:absolute;left:485.6px;top:142.2px;font-size:14.8px;color:#ececec;white-space:nowrap;transform:scaleX(0.695);transform-origin:0 0">48.93</div>
<div style="position:absolute;left:543.7px;top:142.2px;font-size:14.8px;color:#ececec;white-space:nowrap;transform:scaleX(0.695);transform-origin:0 0">87.86</div>
<div style="position:absolute;left:606.0px;top:142.2px;font-size:14.8px;color:#ececec;white-space:nowrap;transform:scaleX(0.695);transform-origin:0 0">59.48</div>
<div style="position:absolute;left:643.6px;top:142.2px;font-size:14.8px;color:#ececec;white-space:nowrap;transform:scaleX(0.695);transform-origin:0 0">24.66</div>
<div style="position:absolute;left:707.0px;top:142.2px;font-size:14.8px;color:#ececec;white-space:nowrap;transform:scaleX(0.695);transform-origin:0 0">39.19</div>
<div style="position:absolute;left:776.2px;top:142.2px;font-size:14.8px;color:#ececec;white-space:nowrap;transform:scaleX(0.695);transform-origin:0 0">14.00</div>
<div style="position:absolute;left:810.7px;top:142.2px;font-size:14.8px;color:#ececec;white-space:nowrap;transform:scaleX(0.695);transform-origin:0 0">89.71</div>
<div style="position:absolute;left:874.6px;top:142.2px;font-size:14.8px;color:#ececec;white-space:nowrap;transform:scaleX(0.695);transform-origin:0 0">89.20</div>
<div style="position:absolute;left:943.3px;top:142.2px;font-size:14.8px;color:#ececec;white-space:nowrap;transform:scaleX(0.695);transform-origin:0 0">13.10</div>
<div style="position:absolute;left:975.6px;top:142.2px;font-size:14.8px;color:#ececec;white-space:nowrap;transform:scaleX(0.695);transform-origin:0 0">48.20</div>
<div style="position:absolute;left:1008.5px;top:142.2px;font-size:14.8px;color:#ececec;white-space:nowrap;transform:scaleX(0.695);transform-origin:0 0">24.47</div>
<div style="position:absolute;left:1041.3px;top:142.2px;font-size:14.8px;color:#ececec;white-space:nowrap;transform:scaleX(0.695);transform-origin:0 0">123.72</div>
<div style="position:absolute;left:1079.3px;top:142.2px;font-size:14.8px;color:#ececec;white-space:nowrap;transform:scaleX(0.695);transform-origin:0 0">39.50</div>
<div style="position:absolute;left:1124.4px;top:142.2px;font-size:14.8px;color:#ececec;white-space:nowrap;transform:scaleX(0.695);transform-origin:0 0">40.74</div>
<div style="position:absolute;left:1156.7px;top:142.2px;font-size:14.8px;color:#ececec;white-space:nowrap;transform:scaleX(0.695);transform-origin:0 0">44.62</div>
<div style="position:absolute;left:1206.6px;top:142.2px;font-size:14.8px;color:#ececec;white-space:nowrap;transform:scaleX(0.695);transform-origin:0 0">150.06</div>
<div style="position:absolute;left:1265.7px;top:142.2px;font-size:14.8px;color:#ececec;white-space:nowrap;transform:scaleX(0.695);transform-origin:0 0">15.15</div>
<div style="position:absolute;left:10px;top:161.50px;width:1282px;height:22.75px;background:#434343"></div>
<div style="position:absolute;left:0;top:161.50px;width:10px;height:22.75px;background:linear-gradient(#262626,#2c2c2c 50%,#262626);border-bottom:1px solid #1c1c1c;box-sizing:border-box"></div>
<div style="position:absolute;left:12.0px;top:165.0px;font-size:14.8px;color:#ececec;white-space:nowrap;transform:scaleX(0.695);transform-origin:0 0">&Delta;E 2000</div>
<div style="position:absolute;left:86.2px;top:165.0px;font-size:14.8px;color:#ececec;white-space:nowrap;transform:scaleX(0.695);transform-origin:0 0">2.30</div>
<div style="position:absolute;left:124.5px;top:165.0px;font-size:14.8px;color:#ececec;white-space:nowrap;transform:scaleX(0.695);transform-origin:0 0">1.45</div>
<div style="position:absolute;left:163.9px;top:165.0px;font-size:14.8px;color:#ececec;white-space:nowrap;transform:scaleX(0.695);transform-origin:0 0">1.55</div>
<div style="position:absolute;left:203.6px;top:165.0px;font-size:14.8px;color:#ececec;white-space:nowrap;transform:scaleX(0.695);transform-origin:0 0">1.36</div>
<div style="position:absolute;left:243.0px;top:165.0px;font-size:14.8px;color:#ececec;white-space:nowrap;transform:scaleX(0.695);transform-origin:0 0">1.11</div>
<div style="position:absolute;left:282.7px;top:165.0px;font-size:14.8px;color:#ececec;white-space:nowrap;transform:scaleX(0.695);transform-origin:0 0">1.11</div>
<div style="position:absolute;left:311.2px;top:165.0px;font-size:14.8px;color:#ececec;white-space:nowrap;transform:scaleX(0.695);transform-origin:0 0">2.68</div>
<div style="position:absolute;left:358.0px;top:165.0px;font-size:14.8px;color:#ececec;white-space:nowrap;transform:scaleX(0.695);transform-origin:0 0">3.03</div>
<div style="position:absolute;left:406.5px;top:165.0px;font-size:14.8px;color:#ececec;white-space:nowrap;transform:scaleX(0.695);transform-origin:0 0">3.79</div>
<div style="position:absolute;left:448.8px;top:165.0px;font-size:14.8px;color:#ececec;white-space:nowrap;transform:scaleX(0.695);transform-origin:0 0">4.42</div>
<div style="position:absolute;left:485.6px;top:165.0px;font-size:14.8px;color:#ececec;white-space:nowrap;transform:scaleX(0.695);transform-origin:0 0">6.86</div>
<div style="position:absolute;left:543.7px;top:165.0px;font-size:14.8px;color:#ececec;white-space:nowrap;transform:scaleX(0.695);transform-origin:0 0">4.60</div>
<div style="position:absolute;left:606.0px;top:165.0px;font-size:14.8px;color:#ececec;white-space:nowrap;transform:scaleX(0.695);transform-origin:0 0">3.32</div>
<div style="position:absolute;left:643.6px;top:165.0px;font-size:14.8px;color:#ececec;white-space:nowrap;transform:scaleX(0.695);transform-origin:0 0">8.43</div>
<div style="position:absolute;left:707.0px;top:165.0px;font-size:14.8px;color:#ececec;white-space:nowrap;transform:scaleX(0.695);transform-origin:0 0">5.12</div>
<div style="position:absolute;left:776.2px;top:165.0px;font-size:14.8px;color:#ececec;white-space:nowrap;transform:scaleX(0.695);transform-origin:0 0">8.33</div>
<div style="position:absolute;left:810.7px;top:165.0px;font-size:14.8px;color:#ececec;white-space:nowrap;transform:scaleX(0.695);transform-origin:0 0">5.70</div>
<div style="position:absolute;left:874.6px;top:165.0px;font-size:14.8px;color:#ececec;white-space:nowrap;transform:scaleX(0.695);transform-origin:0 0">2.56</div>
<div style="position:absolute;left:943.3px;top:165.0px;font-size:14.8px;color:#ececec;white-space:nowrap;transform:scaleX(0.695);transform-origin:0 0">11.28</div>
<div style="position:absolute;left:975.6px;top:165.0px;font-size:14.8px;color:#ececec;white-space:nowrap;transform:scaleX(0.695);transform-origin:0 0">5.98</div>
<div style="position:absolute;left:1008.5px;top:165.0px;font-size:14.8px;color:#ececec;white-space:nowrap;transform:scaleX(0.695);transform-origin:0 0">4.69</div>
<div style="position:absolute;left:1041.3px;top:165.0px;font-size:14.8px;color:#ececec;white-space:nowrap;transform:scaleX(0.695);transform-origin:0 0">3.52</div>
<div style="position:absolute;left:1079.3px;top:165.0px;font-size:14.8px;color:#ececec;white-space:nowrap;transform:scaleX(0.695);transform-origin:0 0">7.13</div>
<div style="position:absolute;left:1124.4px;top:165.0px;font-size:14.8px;color:#ececec;white-space:nowrap;transform:scaleX(0.695);transform-origin:0 0">2.20</div>
<div style="position:absolute;left:1156.7px;top:165.0px;font-size:14.8px;color:#ececec;white-space:nowrap;transform:scaleX(0.695);transform-origin:0 0">6.72</div>
<div style="position:absolute;left:1206.6px;top:165.0px;font-size:14.8px;color:#ececec;white-space:nowrap;transform:scaleX(0.695);transform-origin:0 0">8.25</div>
<div style="position:absolute;left:1265.7px;top:165.0px;font-size:14.8px;color:#ececec;white-space:nowrap;transform:scaleX(0.695);transform-origin:0 0">24.83</div>
<div style="position:absolute;left:10px;top:184px;width:1282px;height:14px;background:#5a5a5a"></div>
<div style="position:absolute;left:22px;top:185px;width:1080px;height:12px;border-radius:6px;background:#474747"></div>
<div style="position:absolute;left:11px;top:185px;width:10px;height:12px;background:#767676"></div>
<svg style="position:absolute;left:13px;top:187px" width="6" height="8"><path d="M5 0L0 4L5 8z" fill="#9a9a9a"/></svg>
<div style="position:absolute;left:1280px;top:185px;width:9px;height:12px;border-radius:2px;background:#777;border:1px solid #8a8a8a;box-sizing:border-box"></div>
<svg style="position:absolute;left:1282.5px;top:187px" width="5" height="8"><path d="M0 0L4.5 4L0 8z" fill="#3e3e3e"/></svg>
</div>
<div style="position:absolute;left:0;top:803px;width:1600px;height:67px;background:#323232"></div>
<div style="position:absolute;left:0;top:806px;width:1276px;height:64px;overflow:hidden">
<div style="position:absolute;left:-24.2px;top:2px;width:50px;height:49px;border-radius:5px 5px 0 0;background:linear-gradient(#b0b0b0,#9a9a9a 30%,#858585 70%,#6e6e6e)"></div>
<div style="position:absolute;left:-19.2px;top:7px;width:40px;height:24px;border-radius:4px;background:#000000;box-shadow:inset 1px 1px 1px rgba(0,0,0,0.35)"></div>
<div style="position:absolute;left:-34.2px;top:35px;width:70px;text-align:center;font-size:12px;font-weight:bold;color:#252525;white-space:nowrap;transform:scaleX(0.84)">Black</div>
<div style="position:absolute;left:27.8px;top:2px;width:50px;height:49px;border-radius:5px 5px 0 0;background:linear-gradient(#b0b0b0,#9a9a9a 30%,#858585 70%,#6e6e6e)"></div>
<div style="position:absolute;left:32.8px;top:7px;width:40px;height:24px;border-radius:4px;background:#735244;box-shadow:inset 1px 1px 1px rgba(0,0,0,0.35)"></div>
<div style="position:absolute;left:17.8px;top:35px;width:70px;text-align:center;font-size:12px;font-weight:bold;color:#252525;white-space:nowrap;transform:scaleX(0.84)">Dark Skin</div>
<div style="position:absolute;left:79.8px;top:2px;width:50px;height:49px;border-radius:5px 5px 0 0;background:linear-gradient(#b0b0b0,#9a9a9a 30%,#858585 70%,#6e6e6e)"></div>
<div style="position:absolute;left:84.8px;top:7px;width:40px;height:24px;border-radius:4px;background:#c29682;box-shadow:inset 1px 1px 1px rgba(0,0,0,0.35)"></div>
<div style="position:absolute;left:69.8px;top:35px;width:70px;text-align:center;font-size:12px;font-weight:bold;color:#252525;white-space:nowrap;transform:scaleX(0.84)">Light Skin</div>
<div style="position:absolute;left:131.8px;top:2px;width:50px;height:49px;border-radius:5px 5px 0 0;background:linear-gradient(#b0b0b0,#9a9a9a 30%,#858585 70%,#6e6e6e)"></div>
<div style="position:absolute;left:136.8px;top:7px;width:40px;height:24px;border-radius:4px;background:#5f7ba1;box-shadow:inset 1px 1px 1px rgba(0,0,0,0.35)"></div>
<div style="position:absolute;left:121.8px;top:35px;width:70px;text-align:center;font-size:12px;font-weight:bold;color:#252525;white-space:nowrap;transform:scaleX(0.84)">Blue Sky</div>
<div style="position:absolute;left:183.8px;top:2px;width:50px;height:49px;border-radius:5px 5px 0 0;background:linear-gradient(#b0b0b0,#9a9a9a 30%,#858585 70%,#6e6e6e)"></div>
<div style="position:absolute;left:188.8px;top:7px;width:40px;height:24px;border-radius:4px;background:#586d41;box-shadow:inset 1px 1px 1px rgba(0,0,0,0.35)"></div>
<div style="position:absolute;left:173.8px;top:35px;width:70px;text-align:center;font-size:12px;font-weight:bold;color:#252525;white-space:nowrap;transform:scaleX(0.84)">Foliage</div>
<div style="position:absolute;left:235.8px;top:2px;width:50px;height:49px;border-radius:5px 5px 0 0;background:linear-gradient(#b0b0b0,#9a9a9a 30%,#858585 70%,#6e6e6e)"></div>
<div style="position:absolute;left:240.8px;top:7px;width:40px;height:12px;border-radius:4px;background:#8281b4;box-shadow:inset 1px 1px 1px rgba(0,0,0,0.35)"></div>
<div style="position:absolute;left:231.6px;top:25px;width:60px;text-align:center"><div style="display:inline-block;text-align:left;font-size:12px;line-height:11.5px;font-weight:bold;color:#252525;white-space:nowrap;transform:scaleX(0.88)">Blue<br>Flower</div></div>
<div style="position:absolute;left:287.8px;top:2px;width:50px;height:49px;border-radius:5px 5px 0 0;background:linear-gradient(#b0b0b0,#9a9a9a 30%,#858585 70%,#6e6e6e)"></div>
<div style="position:absolute;left:292.8px;top:7px;width:40px;height:12px;border-radius:4px;background:#5fbfa8;box-shadow:inset 1px 1px 1px rgba(0,0,0,0.35)"></div>
<div style="position:absolute;left:283.6px;top:25px;width:60px;text-align:center"><div style="display:inline-block;text-align:left;font-size:12px;line-height:11.5px;font-weight:bold;color:#252525;white-space:nowrap;transform:scaleX(0.88)">Bluish<br>Green</div></div>
<div style="position:absolute;left:339.8px;top:2px;width:50px;height:49px;border-radius:5px 5px 0 0;background:linear-gradient(#b0b0b0,#9a9a9a 30%,#858585 70%,#6e6e6e)"></div>
<div style="position:absolute;left:344.8px;top:7px;width:40px;height:24px;border-radius:4px;background:#e07b2a;box-shadow:inset 1px 1px 1px rgba(0,0,0,0.35)"></div>
<div style="position:absolute;left:329.8px;top:35px;width:70px;text-align:center;font-size:12px;font-weight:bold;color:#252525;white-space:nowrap;transform:scaleX(0.84)">Orange</div>
<div style="position:absolute;left:391.8px;top:2px;width:50px;height:49px;border-radius:5px 5px 0 0;background:linear-gradient(#b0b0b0,#9a9a9a 30%,#858585 70%,#6e6e6e)"></div>
<div style="position:absolute;left:396.8px;top:7px;width:40px;height:12px;border-radius:4px;background:#3e56a8;box-shadow:inset 1px 1px 1px rgba(0,0,0,0.35)"></div>
<div style="position:absolute;left:387.6px;top:25px;width:60px;text-align:center"><div style="display:inline-block;text-align:left;font-size:12px;line-height:11.5px;font-weight:bold;color:#252525;white-space:nowrap;transform:scaleX(0.88)">Purplish<br>Blue</div></div>
<div style="position:absolute;left:443.8px;top:2px;width:50px;height:49px;border-radius:5px 5px 0 0;background:linear-gradient(#b0b0b0,#9a9a9a 30%,#858585 70%,#6e6e6e)"></div>
<div style="position:absolute;left:448.8px;top:7px;width:40px;height:12px;border-radius:4px;background:#cf4d5c;box-shadow:inset 1px 1px 1px rgba(0,0,0,0.35)"></div>
<div style="position:absolute;left:439.6px;top:25px;width:60px;text-align:center"><div style="display:inline-block;text-align:left;font-size:12px;line-height:11.5px;font-weight:bold;color:#252525;white-space:nowrap;transform:scaleX(0.88)">Moderate<br>Red</div></div>
<div style="position:absolute;left:495.8px;top:2px;width:50px;height:49px;border-radius:5px 5px 0 0;background:linear-gradient(#b0b0b0,#9a9a9a 30%,#858585 70%,#6e6e6e)"></div>
<div style="position:absolute;left:500.8px;top:7px;width:40px;height:24px;border-radius:4px;background:#5b3a6e;box-shadow:inset 1px 1px 1px rgba(0,0,0,0.35)"></div>
<div style="position:absolute;left:485.8px;top:35px;width:70px;text-align:center;font-size:12px;font-weight:bold;color:#252525;white-space:nowrap;transform:scaleX(0.84)">Purple</div>
<div style="position:absolute;left:547.8px;top:2px;width:50px;height:49px;border-radius:5px 5px 0 0;background:linear-gradient(#b0b0b0,#9a9a9a 30%,#858585 70%,#6e6e6e)"></div>
<div style="position:absolute;left:552.8px;top:7px;width:40px;height:12px;border-radius:4px;background:#9dbc3a;box-shadow:inset 1px 1px 1px rgba(0,0,0,0.35)"></div>
<div style="position:absolute;left:543.6px;top:25px;width:60px;text-align:center"><div style="display:inline-block;text-align:left;font-size:12px;line-height:11.5px;font-weight:bold;color:#252525;white-space:nowrap;transform:scaleX(0.88)">Yellow<br>Green</div></div>
<div style="position:absolute;left:599.8px;top:2px;width:50px;height:49px;border-radius:5px 5px 0 0;background:linear-gradient(#b0b0b0,#9a9a9a 30%,#858585 70%,#6e6e6e)"></div>
<div style="position:absolute;left:604.8px;top:7px;width:40px;height:12px;border-radius:4px;background:#eaa22c;box-shadow:inset 1px 1px 1px rgba(0,0,0,0.35)"></div>
<div style="position:absolute;left:595.6px;top:25px;width:60px;text-align:center"><div style="display:inline-block;text-align:left;font-size:12px;line-height:11.5px;font-weight:bold;color:#252525;white-space:nowrap;transform:scaleX(0.88)">Orange<br>Yellow</div></div>
<div style="position:absolute;left:651.8px;top:2px;width:50px;height:49px;border-radius:5px 5px 0 0;background:linear-gradient(#b0b0b0,#9a9a9a 30%,#858585 70%,#6e6e6e)"></div>
<div style="position:absolute;left:656.8px;top:7px;width:40px;height:24px;border-radius:4px;background:#2e3e9a;box-shadow:inset 1px 1px 1px rgba(0,0,0,0.35)"></div>
<div style="position:absolute;left:641.8px;top:35px;width:70px;text-align:center;font-size:12px;font-weight:bold;color:#252525;white-space:nowrap;transform:scaleX(0.84)">Blue</div>
<div style="position:absolute;left:703.8px;top:2px;width:50px;height:49px;border-radius:5px 5px 0 0;background:linear-gradient(#b0b0b0,#9a9a9a 30%,#858585 70%,#6e6e6e)"></div>
<div style="position:absolute;left:708.8px;top:7px;width:40px;height:24px;border-radius:4px;background:#479649;box-shadow:inset 1px 1px 1px rgba(0,0,0,0.35)"></div>
<div style="position:absolute;left:693.8px;top:35px;width:70px;text-align:center;font-size:12px;font-weight:bold;color:#252525;white-space:nowrap;transform:scaleX(0.84)">Green</div>
<div style="position:absolute;left:755.8px;top:2px;width:50px;height:49px;border-radius:5px 5px 0 0;background:linear-gradient(#b0b0b0,#9a9a9a 30%,#858585 70%,#6e6e6e)"></div>
<div style="position:absolute;left:760.8px;top:7px;width:40px;height:24px;border-radius:4px;background:#b7333a;box-shadow:inset 1px 1px 1px rgba(0,0,0,0.35)"></div>
<div style="position:absolute;left:745.8px;top:35px;width:70px;text-align:center;font-size:12px;font-weight:bold;color:#252525;white-space:nowrap;transform:scaleX(0.84)">Red</div>
<div style="position:absolute;left:807.8px;top:2px;width:50px;height:49px;border-radius:5px 5px 0 0;background:linear-gradient(#b0b0b0,#9a9a9a 30%,#858585 70%,#6e6e6e)"></div>
<div style="position:absolute;left:812.8px;top:7px;width:40px;height:24px;border-radius:4px;background:#eec61e;box-shadow:inset 1px 1px 1px rgba(0,0,0,0.35)"></div>
<div style="position:absolute;left:797.8px;top:35px;width:70px;text-align:center;font-size:12px;font-weight:bold;color:#252525;white-space:nowrap;transform:scaleX(0.84)">Yellow</div>
<div style="position:absolute;left:859.8px;top:2px;width:50px;height:49px;border-radius:5px 5px 0 0;background:linear-gradient(#b0b0b0,#9a9a9a 30%,#858585 70%,#6e6e6e)"></div>
<div style="position:absolute;left:864.8px;top:7px;width:40px;height:24px;border-radius:4px;background:#bc558f;box-shadow:inset 1px 1px 1px rgba(0,0,0,0.35)"></div>
<div style="position:absolute;left:849.8px;top:35px;width:70px;text-align:center;font-size:12px;font-weight:bold;color:#252525;white-space:nowrap;transform:scaleX(0.84)">Magenta</div>
<div style="position:absolute;left:911.8px;top:2px;width:50px;height:49px;border-radius:5px 5px 0 0;background:linear-gradient(#b0b0b0,#9a9a9a 30%,#858585 70%,#6e6e6e)"></div>
<div style="position:absolute;left:916.8px;top:7px;width:40px;height:24px;border-radius:4px;background:#0089a6;box-shadow:inset 1px 1px 1px rgba(0,0,0,0.35)"></div>
<div style="position:absolute;left:901.8px;top:35px;width:70px;text-align:center;font-size:12px;font-weight:bold;color:#252525;white-space:nowrap;transform:scaleX(0.84)">Cyan</div>
<div style="position:absolute;left:963.8px;top:2px;width:50px;height:49px;border-radius:5px 5px 0 0;background:linear-gradient(#b0b0b0,#9a9a9a 30%,#858585 70%,#6e6e6e)"></div>
<div style="position:absolute;left:968.8px;top:7px;width:40px;height:24px;border-radius:4px;background:#ff0000;box-shadow:inset 1px 1px 1px rgba(0,0,0,0.35)"></div>
<div style="position:absolute;left:953.8px;top:35px;width:70px;text-align:center;font-size:12px;font-weight:bold;color:#252525;white-space:nowrap;transform:scaleX(0.84)">100% Red</div>
<div style="position:absolute;left:1015.8px;top:2px;width:50px;height:49px;border-radius:5px 5px 0 0;background:linear-gradient(#b0b0b0,#9a9a9a 30%,#858585 70%,#6e6e6e)"></div>
<div style="position:absolute;left:1020.8px;top:7px;width:40px;height:12px;border-radius:4px;background:#00ff00;box-shadow:inset 1px 1px 1px rgba(0,0,0,0.35)"></div>
<div style="position:absolute;left:1011.6px;top:25px;width:60px;text-align:center"><div style="display:inline-block;text-align:left;font-size:12px;line-height:11.5px;font-weight:bold;color:#252525;white-space:nowrap;transform:scaleX(0.88)">100%<br>Green</div></div>
<div style="position:absolute;left:1067.8px;top:2px;width:50px;height:49px;border-radius:5px 5px 0 0;background:linear-gradient(#b0b0b0,#9a9a9a 30%,#858585 70%,#6e6e6e)"></div>
<div style="position:absolute;left:1072.8px;top:7px;width:40px;height:12px;border-radius:4px;background:#0000ff;box-shadow:inset 1px 1px 1px rgba(0,0,0,0.35)"></div>
<div style="position:absolute;left:1063.6px;top:25px;width:60px;text-align:center"><div style="display:inline-block;text-align:left;font-size:12px;line-height:11.5px;font-weight:bold;color:#252525;white-space:nowrap;transform:scaleX(0.88)">100%<br>Blue</div></div>
<div style="position:absolute;left:1119.8px;top:2px;width:50px;height:49px;border-radius:5px 5px 0 0;background:linear-gradient(#b0b0b0,#9a9a9a 30%,#858585 70%,#6e6e6e)"></div>
<div style="position:absolute;left:1124.8px;top:7px;width:40px;height:12px;border-radius:4px;background:#00ffff;box-shadow:inset 1px 1px 1px rgba(0,0,0,0.35)"></div>
<div style="position:absolute;left:1115.6px;top:25px;width:60px;text-align:center"><div style="display:inline-block;text-align:left;font-size:12px;line-height:11.5px;font-weight:bold;color:#252525;white-space:nowrap;transform:scaleX(0.88)">100%<br>Cyan</div></div>
<div style="position:absolute;left:1171.8px;top:2px;width:50px;height:49px;border-radius:5px 5px 0 0;background:linear-gradient(#b0b0b0,#9a9a9a 30%,#858585 70%,#6e6e6e)"></div>
<div style="position:absolute;left:1176.8px;top:7px;width:40px;height:12px;border-radius:4px;background:#ff00ff;box-shadow:inset 1px 1px 1px rgba(0,0,0,0.35)"></div>
<div style="position:absolute;left:1167.6px;top:25px;width:60px;text-align:center"><div style="display:inline-block;text-align:left;font-size:12px;line-height:11.5px;font-weight:bold;color:#252525;white-space:nowrap;transform:scaleX(0.88)">100%<br>Magenta</div></div>
<div style="position:absolute;left:1223.8px;top:2px;width:50px;height:49px;border-radius:5px 5px 0 0;background:linear-gradient(#2a2a2a,#1c1c1c)"></div>
<div style="position:absolute;left:1228.8px;top:7px;width:40px;height:12px;border-radius:4px;background:#ffff00;box-shadow:inset 1px 1px 1px rgba(0,0,0,0.35)"></div>
<div style="position:absolute;left:1219.6px;top:25px;width:60px;text-align:center"><div style="display:inline-block;text-align:left;font-size:12px;line-height:11.5px;font-weight:bold;color:#ffffff;white-space:nowrap;transform:scaleX(0.88)">100%<br>Yellow</div></div>
<div style="position:absolute;left:0;top:52px;width:1276px;height:10px;background:#5e5e5e"></div>
<div style="position:absolute;left:243px;top:52px;width:1030px;height:10px;border-radius:5px;background:#444"></div>
<div style="position:absolute;left:2px;top:52px;width:10px;height:10px;background:#7a7a7a"></div>
<svg style="position:absolute;left:4px;top:53px" width="6" height="8"><path d="M5 0L0 4L5 8z" fill="#3a3a3a"/></svg>
<div style="position:absolute;left:1265px;top:52px;width:10px;height:10px;background:#777"></div>
<svg style="position:absolute;left:1268px;top:53px" width="6" height="8"><path d="M0 0L5 4L0 8z" fill="#3a3a3a"/></svg>
</div>
<div style="position:absolute;left:0;top:868px;width:1276px;height:2px;background:#222"></div>
<div style="position:absolute;left:1274px;top:806px;width:326px;height:64px;background:#1e1e1e"></div>
<div style="position:absolute;left:1277px;top:808px;width:48px;height:18px;border-radius:4px 4px 0 0;background:linear-gradient(#b4b4b4,#9a9a9a 40%,#777)"></div>
<div style="position:absolute;left:1294px;top:810px;width:15px;height:15px;border-radius:50%;background:linear-gradient(#6e6e6e,#a0a0a0)"></div>
<svg style="position:absolute;left:1297.5px;top:814px" width="9" height="6"><path d="M0 5.5L4.5 0L9 5.5z" fill="#333"/></svg>
<div style="position:absolute;left:1277px;top:827px;width:48px;height:41px;border-radius:0 0 4px 4px;background:linear-gradient(#b4b4b4,#9a9a9a 40%,#777)"></div>
<div style="position:absolute;left:1285.5px;top:832px;width:31px;height:31px;border-radius:4px;border:3px solid #262626;box-sizing:border-box;background:linear-gradient(#a8a8a8 50%,#8a8a8a 50%)"></div>
<div style="position:absolute;left:1294.5px;top:841px;width:13px;height:13px;background:linear-gradient(#1a1a1a 50%,#000 50%)"></div>
<div style="position:absolute;left:1326.6px;top:808px;width:44px;height:30px;border-radius:4px 0 0 0;background:linear-gradient(#b4b4b4,#9a9a9a 40%,#777)"></div>
<div style="position:absolute;left:1338.6px;top:813px;width:20px;height:20px;border-radius:50%;background:linear-gradient(#6e6e6e,#a8a8a8)"></div>
<div style="position:absolute;left:1371.9px;top:808px;width:44px;height:30px;border-radius:0;background:linear-gradient(#b4b4b4,#9a9a9a 40%,#777)"></div>
<div style="position:absolute;left:1383.9px;top:813px;width:20px;height:20px;border-radius:50%;background:linear-gradient(#6e6e6e,#a8a8a8)"></div>
<div style="position:absolute;left:1417.2px;top:808px;width:44px;height:30px;border-radius:0;background:linear-gradient(#b4b4b4,#9a9a9a 40%,#777)"></div>
<div style="position:absolute;left:1429.2px;top:813px;width:20px;height:20px;border-radius:50%;background:linear-gradient(#6e6e6e,#a8a8a8)"></div>
<div style="position:absolute;left:1462.5px;top:808px;width:44px;height:30px;border-radius:0;background:linear-gradient(#b4b4b4,#9a9a9a 40%,#777)"></div>
<div style="position:absolute;left:1474.5px;top:813px;width:20px;height:20px;border-radius:50%;background:linear-gradient(#6e6e6e,#a8a8a8)"></div>
<div style="position:absolute;left:1344px;top:818px;width:9px;height:9px;background:#2a2a2a"></div>
<svg style="position:absolute;left:1391px;top:817px" width="10" height="12"><path d="M0 0L10 6L0 12z" fill="#2a2a2a"/></svg>
<svg style="position:absolute;left:1433px;top:816px" width="14" height="13"><path d="M4 1H1.2V12H4M10 1H12.8V12H10" fill="none" stroke="#2a2a2a" stroke-width="2"/><rect x="5" y="5.5" width="1.6" height="1.6" fill="#2a2a2a"/><rect x="7.4" y="5.5" width="1.6" height="1.6" fill="#2a2a2a"/></svg>
<svg style="position:absolute;left:1475.5px;top:818.5px" width="18" height="9"><ellipse cx="5" cy="4.5" rx="3.6" ry="2.9" fill="none" stroke="#2a2a2a" stroke-width="1.7"/><ellipse cx="12.6" cy="4.5" rx="3.6" ry="2.9" fill="none" stroke="#2a2a2a" stroke-width="1.7"/></svg>
<div style="position:absolute;left:1507.8px;top:808px;width:44px;height:30px;background:linear-gradient(#3a3a3a,#2c2c2c);border-radius:0"></div>
<div style="position:absolute;left:1519.8px;top:813px;width:20px;height:20px;border-radius:50%;background:#262626"></div>
<div style="position:absolute;left:1553.1px;top:808px;width:44px;height:30px;background:linear-gradient(#3a3a3a,#2c2c2c);border-radius:0 4px 0 0"></div>
<div style="position:absolute;left:1565.1px;top:813px;width:20px;height:20px;border-radius:50%;background:#262626"></div>
<svg style="position:absolute;left:1521px;top:816px" width="16" height="14"><path d="M3 6A5 5 0 0 1 12 4M13 8A5 5 0 0 1 4 10" fill="none" stroke="#1a1a1a" stroke-width="2.2"/><path d="M10 1L14 4L10 6z M6 8L2 10L6 13z" fill="#1a1a1a"/></svg>
<div style="position:absolute;left:1326px;top:839px;width:135px;height:29px;border-radius:0 0 0 4px;background:linear-gradient(#b8b8b8,#9c9c9c 45%,#7a7a7a)"></div>
<div style="position:absolute;left:1463px;top:839px;width:135px;height:29px;border-radius:0 0 4px 0;background:linear-gradient(#b8b8b8,#9c9c9c 45%,#7a7a7a)"></div>
<div style="position:absolute;left:1347px;top:844px;width:20px;height:20px;border-radius:50%;background:linear-gradient(#7a7a7a,#aaa)"></div>
<div style="position:absolute;left:1560px;top:844px;width:20px;height:20px;border-radius:50%;background:linear-gradient(#7a7a7a,#aaa)"></div>
<div style="position:absolute;left:1351.52px;top:844.42px;font-size:19px;line-height:19px;color:#2a2a2a;white-space:nowrap;font-weight:bold;">&laquo;</div>
<div style="position:absolute;left:1565.02px;top:844.42px;font-size:19px;line-height:19px;color:#2a2a2a;white-space:nowrap;font-weight:bold;">&raquo;</div>
<div style="position:absolute;left:1383.00px;top:844.58px;font-size:22px;line-height:22px;color:#2a2a2a;white-space:nowrap;font-weight:bold;transform:scaleX(0.9887);transform-origin:0 0;">Back</div>
<div style="position:absolute;left:1490.00px;top:844.58px;font-size:22px;line-height:22px;color:#2a2a2a;white-space:nowrap;font-weight:bold;transform:scaleX(1.1114);transform-origin:0 0;">Next</div><script>
(function(){
var L=[[0.1741, 0.005], [0.17408, 0.00499], [0.17405, 0.00498], [0.17402, 0.00497], [0.17398, 0.00496], [0.17394, 0.00494], [0.1739, 0.00493], [0.17385, 0.00491], [0.1738, 0.0049], [0.17375, 0.00489], [0.17369, 0.00487], [0.17364, 0.00486], [0.17358, 0.00484], [0.17351, 0.00483], [0.17344, 0.00482], [0.17337, 0.00481], [0.1733, 0.0048], [0.17323, 0.00479], [0.17315, 0.00479], [0.17307, 0.00478], [0.17299, 0.00477], [0.17291, 0.00477], [0.17281, 0.00478], [0.17271, 0.00478], [0.1726, 0.0048], [0.17248, 0.00481], [0.17237, 0.00482], [0.17224, 0.00482], [0.17211, 0.00484], [0.17197, 0.00486], [0.1718, 0.00491], [0.17162, 0.00499], [0.1714, 0.0051], [0.17116, 0.00524], [0.17091, 0.00539], [0.17065, 0.00557], [0.17036, 0.00577], [0.17004, 0.006], [0.1697, 0.00626], [0.16932, 0.00656], [0.1689, 0.0069], [0.16846, 0.00728], [0.16799, 0.00768], [0.1675, 0.00812], [0.16698, 0.00859], [0.16642, 0.0091], [0.1658, 0.00965], [0.16513, 0.01025], [0.1644, 0.0109], [0.16362, 0.01158], [0.16279, 0.01228], [0.16193, 0.01302], [0.16101, 0.0138], [0.16002, 0.01465], [0.15896, 0.01557], [0.15783, 0.01658], [0.1566, 0.0177], [0.1553, 0.01884], [0.15396, 0.01996], [0.15255, 0.02111], [0.15106, 0.02237], [0.14947, 0.02379], [0.14778, 0.02545], [0.14596, 0.02739], [0.144, 0.0297], [0.14182, 0.03244], [0.13941, 0.03557], [0.13683, 0.03902], [0.13417, 0.04269], [0.13149, 0.04649], [0.12887, 0.05033], [0.12638, 0.05413], [0.1241, 0.0578], [0.12206, 0.06127], [0.12018, 0.06459], [0.11843, 0.06787], [0.11675, 0.07119], [0.11508, 0.07465], [0.11337, 0.07834], [0.11156, 0.08236], [0.1096, 0.0868], [0.10752, 0.09158], [0.10539, 0.09657], [0.1032, 0.1018], [0.10096, 0.10731], [0.09864, 0.11313], [0.09627, 0.11928], [0.09382, 0.12579], [0.0913, 0.1327], [0.08869, 0.13996], [0.08597, 0.14753], [0.08317, 0.15543], [0.08031, 0.16367], [0.07742, 0.1723], [0.0745, 0.18133], [0.07159, 0.19079], [0.0687, 0.2007], [0.06581, 0.21107], [0.06289, 0.22188], [0.05995, 0.23311], [0.05701, 0.24474], [0.05407, 0.25677], [0.05114, 0.26916], [0.04825, 0.28191], [0.0454, 0.295], [0.04255, 0.30854], [0.03967, 0.32259], [0.03679, 0.33707], [0.03395, 0.35189], [0.03117, 0.36695], [0.02848, 0.38216], [0.02591, 0.39744], [0.0235, 0.4127], [0.0212, 0.42809], [0.01895, 0.44378], [0.0168, 0.45966], [0.01475, 0.47563], [0.01284, 0.49159], [0.0111, 0.50744], [0.00954, 0.52308], [0.0082, 0.5384], [0.00704, 0.55354], [0.00602, 0.56865], [0.00515, 0.58365], [0.00447, 0.59849], [0.00398, 0.6131], [0.00371, 0.62739], [0.00368, 0.64132], [0.0039, 0.6548], [0.00436, 0.66796], [0.00504, 0.68091], [0.00594, 0.69359], [0.00707, 0.70591], [0.00842, 0.71781], [0.01001, 0.7292], [0.01183, 0.74003], [0.0139, 0.7502], [0.01624, 0.75981], [0.01885, 0.76895], [0.02172, 0.77759], [0.02481, 0.7857], [0.0281, 0.79323], [0.03157, 0.80015], [0.03517, 0.80642], [0.0389, 0.812], [0.0428, 0.81684], [0.04691, 0.82095], [0.05122, 0.8244], [0.05567, 0.82724], [0.06024, 0.82954], [0.06489, 0.83135], [0.06959, 0.83276], [0.0743, 0.8338], [0.07907, 0.83434], [0.08394, 0.83426], [0.08891, 0.83366], [0.09393, 0.83263], [0.099, 0.83127], [0.10408, 0.82968], [0.10915, 0.82796], [0.1142, 0.8262], [0.11925, 0.8243], [0.12434, 0.82211], [0.12944, 0.81969], [0.13456, 0.81709], [0.13965, 0.81436], [0.14472, 0.81155], [0.14974, 0.80872], [0.1547, 0.8059], [0.1596, 0.80307], [0.16445, 0.80018], [0.16926, 0.79721], [0.17404, 0.79419], [0.17879, 0.79111], [0.18351, 0.78798], [0.18821, 0.78481], [0.1929, 0.7816], [0.19756, 0.77835], [0.20219, 0.77505], [0.20679, 0.7717], [0.21137, 0.76831], [0.21594, 0.76487], [0.2205, 0.76139], [0.22505, 0.75786], [0.2296, 0.7543], [0.23415, 0.75069], [0.23869, 0.74704], [0.24323, 0.74334], [0.24776, 0.73959], [0.25228, 0.73582], [0.25679, 0.732], [0.2613, 0.72816], [0.2658, 0.7243], [0.27029, 0.72041], [0.27478, 0.71647], [0.27926, 0.71251], [0.28373, 0.70851], [0.2882, 0.70449], [0.29267, 0.70045], [0.29713, 0.69638], [0.3016, 0.6923], [0.30607, 0.6882], [0.31053, 0.68407], [0.31499, 0.67992], [0.31945, 0.67575], [0.32391, 0.67156], [0.32837, 0.66735], [0.33283, 0.66313], [0.3373, 0.6589], [0.34177, 0.65465], [0.34625, 0.65038], [0.35073, 0.6461], [0.35521, 0.64179], [0.35969, 0.63748], [0.36416, 0.63316], [0.36863, 0.62883], [0.3731, 0.6245], [0.37756, 0.62016], [0.38202, 0.61581], [0.38647, 0.61145], [0.39093, 0.60708], [0.39537, 0.60271], [0.39982, 0.59834], [0.40426, 0.59397], [0.4087, 0.5896], [0.41314, 0.58523], [0.41758, 0.58087], [0.42202, 0.57649], [0.42646, 0.57212], [0.43089, 0.56776], [0.4353, 0.5634], [0.43971, 0.55904], [0.4441, 0.5547], [0.44848, 0.55036], [0.45285, 0.54603], [0.45721, 0.54169], [0.46156, 0.53737], [0.46589, 0.53305], [0.47021, 0.52875], [0.47452, 0.52447], [0.4788, 0.5202], [0.48307, 0.51595], [0.48733, 0.5117], [0.49157, 0.50747], [0.4958, 0.50326], [0.50001, 0.49906], [0.5042, 0.49488], [0.50836, 0.49073], [0.5125, 0.4866], [0.51662, 0.48249], [0.52072, 0.4784], [0.5248, 0.47433], [0.52886, 0.47029], [0.53289, 0.46627], [0.53689, 0.46228], [0.54086, 0.45832], [0.5448, 0.4544], [0.54871, 0.45051], [0.5526, 0.44665], [0.55646, 0.44282], [0.56029, 0.43902], [0.56408, 0.43525], [0.56783, 0.43153], [0.57154, 0.42784], [0.5752, 0.4242], [0.57882, 0.42059], [0.5824, 0.41701], [0.58594, 0.41347], [0.58944, 0.40996], [0.59289, 0.40651], [0.59629, 0.40311], [0.59963, 0.39977], [0.6029, 0.3965], [0.6061, 0.3933], [0.60925, 0.39017], [0.61233, 0.3871], [0.61536, 0.38409], [0.61833, 0.38112], [0.62126, 0.37821], [0.62415, 0.37534], [0.627, 0.3725], [0.62981, 0.3697], [0.63259, 0.36693], [0.63532, 0.36421], [0.63801, 0.36154], [0.64064, 0.35891], [0.64322, 0.35635], [0.64574, 0.35384], [0.6482, 0.3514], [0.65052, 0.3491], [0.65266, 0.34698], [0.65471, 0.34497], [0.65672, 0.34299], [0.65876, 0.34097], [0.66091, 0.33885], [0.66324, 0.33655], [0.6658, 0.334], [0.66869, 0.33112], [0.67187, 0.32794], [0.67525, 0.32456], [0.67872, 0.32108], [0.68219, 0.31761], [0.68554, 0.31426], [0.68868, 0.31112], [0.6915, 0.3083], [0.69403, 0.30578], [0.69638, 0.30344], [0.69856, 0.30127], [0.70061, 0.29924], [0.70255, 0.29732], [0.70439, 0.29549], [0.70617, 0.29372], [0.7079, 0.292], [0.70957, 0.29033], [0.71114, 0.28876], [0.71263, 0.28727], [0.71404, 0.28586], [0.71537, 0.28453], [0.71664, 0.28326], [0.71784, 0.28205], [0.719, 0.2809], [0.72009, 0.27982], [0.72111, 0.27881], [0.72206, 0.27788], [0.72294, 0.27701], [0.72377, 0.27619], [0.72456, 0.27542], [0.7253, 0.2747], [0.726, 0.274], [0.72665, 0.27336], [0.72722, 0.27278], [0.72775, 0.27226], [0.72823, 0.27178], [0.72868, 0.27133], [0.72911, 0.27089], [0.72955, 0.27045], [0.73, 0.27], [0.73047, 0.26953], [0.73094, 0.26906], [0.73141, 0.26859], [0.73187, 0.26813], [0.73231, 0.26769], [0.73271, 0.26729], [0.73308, 0.26692], [0.7334, 0.2666], [0.73367, 0.26633], [0.7339, 0.2661], [0.7341, 0.2659], [0.73426, 0.26574], [0.7344, 0.2656], [0.73452, 0.26548], [0.73461, 0.26539], [0.7347, 0.2653]];
function col(x,y,gm){var X=x/y,Y=1,Z=(1-x-y)/y;
var r=3.2406*X-1.5372*Y-0.4986*Z,g=-0.9689*X+1.8758*Y+0.0415*Z,b=0.0557*X-0.2040*Y+1.0570*Z;
var inside=(r>=0&&g>=0&&b>=0);if(r<0)r=0;if(g<0)g=0;if(b<0)b=0;var m=Math.max(r,g,b);r/=m;g/=m;b/=m;
if(inside){r=Math.pow(r,gm);g=Math.pow(g,gm);b=Math.pow(b,gm);return [r*255,g*255,b*255];}
var k=0.6;return [r*255*k,g*255*k,b*255*k];}
function draw(id,w,h,fx,fy,clip){var c=document.getElementById(id);if(!c||!c.getContext)return;var ctx=c.getContext('2d');
var off=document.createElement('canvas');off.width=w;off.height=h;var o=off.getContext('2d');var im=o.createImageData(w,h);var d=im.data;
for(var j=0;j<h;j++){for(var i=0;i<w;i++){var k=(j*w+i)*4;var R=0,G=0,B=0;for(var a=0;a<2;a++){for(var b=0;b<2;b++){var p=fx(i+0.25+a*0.5),q=fy(j+0.25+b*0.5);if(q<=0.001)q=0.001;var cc=col(p,q,1.0);R+=cc[0];G+=cc[1];B+=cc[2];}}d[k]=R/4;d[k+1]=G/4;d[k+2]=B/4;d[k+3]=255;}}
o.putImageData(im,0,0);
if(clip){ctx.fillStyle='#242424';ctx.fillRect(0,0,w,h);ctx.save();ctx.beginPath();for(var n=0;n<L.length;n++){var X=968.6+L[n][0]*739.0-969,Y=561.4-L[n][1]*516.0-128;if(n==0)ctx.moveTo(X,Y);else ctx.lineTo(X,Y);}ctx.closePath();ctx.clip();}
ctx.drawImage(off,0,0);if(clip)ctx.restore();}
draw('cie',620,434,function(i){return (i+969-968.6)/739.0;},function(j){return (561.4-(j+128))/516.0;},true);
draw('ins',209,161,function(i){return 0.4193+(i+1374-1476.8)/4185;},function(j){return 0.5053-(j+134-214.3)/3235;},false);
})();
</script>
</body></html>
